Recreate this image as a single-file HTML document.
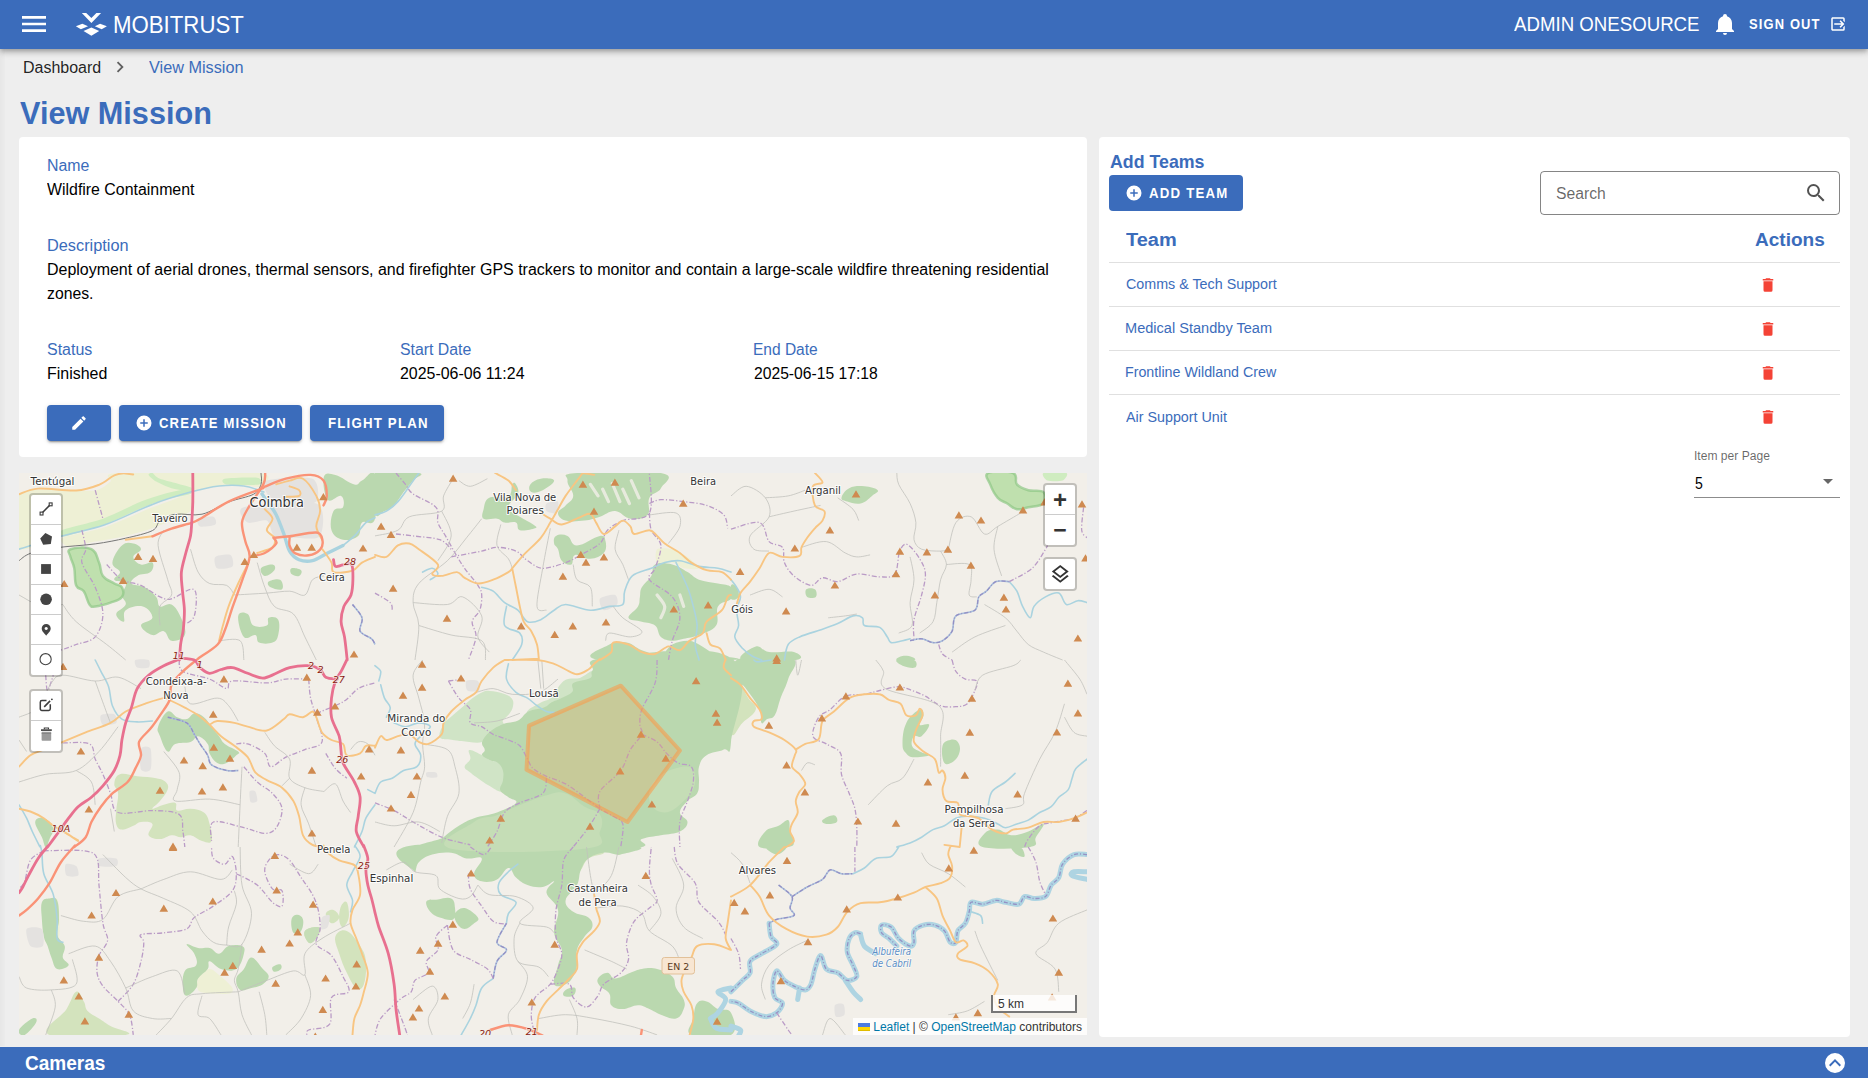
<!DOCTYPE html>
<html lang="en"><head><meta charset="utf-8"><title>View Mission</title>
<style>
*{box-sizing:border-box;margin:0;padding:0}
html,body{width:1868px;height:1078px;overflow:hidden;background:#eee;font-family:"Liberation Sans",sans-serif}
body{position:relative}
.a{position:absolute}
.t{position:absolute;white-space:nowrap;transform-origin:0 50%;display:block}
.bar{left:0;top:0;width:1868px;height:49px;background:#3b6cbb;box-shadow:0 2px 4px -1px rgba(0,0,0,.2),0 4px 5px 0 rgba(0,0,0,.14),0 1px 10px 0 rgba(0,0,0,.12)}
.card{background:#fff;border-radius:4px}
.btn{background:#3b6cbb;border-radius:4px;height:36px;box-shadow:0 3px 1px -2px rgba(0,0,0,.2),0 2px 2px 0 rgba(0,0,0,.14),0 1px 5px 0 rgba(0,0,0,.12)}
.hr{height:1px;background:rgba(0,0,0,.12);left:1109px;width:731px}
svg{position:absolute;display:block;overflow:visible}
.lb{background:#fff;border:2px solid rgba(0,0,0,.2);background-clip:padding-box;border-radius:4px}
.foot{left:0;top:1047px;width:1868px;height:31px;background:#3b6cbb}
</style></head>
<body>
<div class="a" style="left:0;top:48px;width:5px;height:998px;background:linear-gradient(90deg,rgba(0,0,0,.03),rgba(0,0,0,.01))"></div>
<div class="a card" style="left:19px;top:137px;width:1068px;height:320px"></div>
<div class="a card" style="left:1099px;top:137px;width:751px;height:900px"></div>
<!-- map -->
<div class="a" style="left:19px;top:473px;width:1068px;height:562px;overflow:hidden;background:#f2efe9">
<svg style="left:0;top:0" width="1068" height="562" viewBox="19 473 1068 562">
<rect x="19" y="473" width="1068" height="562" fill="#f2efe9"/>
<path fill="#eef0d5" d="M19.0,494.9C24.1,487.2 46.9,490.8 57.1,490.2C67.3,489.6 88.1,491.6 95.2,490.5C102.3,489.4 107.4,483.9 110.5,481.6C113.6,479.3 98.3,474.1 118.1,473.0C137.9,471.9 240.0,471.2 259.1,473.0C278.2,474.8 263.0,484.6 261.0,486.3C259.0,488.0 249.5,485.4 243.9,485.4C238.3,485.4 226.2,485.2 219.1,486.0C212.0,486.8 199.4,489.4 190.5,491.7C181.6,494.0 163.8,499.2 152.4,503.5C141.0,507.8 117.0,519.8 104.8,524.1C92.6,528.4 72.3,532.3 60.9,535.5C49.5,538.7 24.6,553.7 19.0,548.3C13.4,542.9 13.9,502.6 19.0,494.9Z M62.8,537.8C67.6,535.3 92.9,531.4 104.8,527.3C116.7,523.2 141.0,511.6 152.4,507.3C163.8,503.0 185.4,494.4 190.5,494.9C195.6,495.4 195.6,506.6 190.5,511.1C185.4,515.6 161.0,525.0 152.4,528.3C143.8,531.6 133.3,534.1 125.7,535.9C118.1,537.7 102.8,540.2 95.2,541.6C87.6,543.0 72.9,546.9 68.6,546.4C64.3,545.9 58.0,540.3 62.8,537.8Z M657.1,549.2C659.1,547.4 668.2,548.2 672.3,549.2C676.4,550.2 683.9,554.4 687.5,556.9C691.1,559.4 699.5,566.8 699.0,568.3C698.5,569.8 687.3,569.1 683.7,568.3C680.1,567.5 675.8,563.4 672.3,562.6C668.8,561.8 659.1,564.4 657.1,562.6C655.1,560.8 655.1,551.0 657.1,549.2Z M51.4,902.3C52.0,897.8 57.0,897.0 58.1,901.3C59.2,905.6 60.0,930.2 59.4,934.7C58.8,939.2 54.4,939.0 53.3,934.7C52.2,930.4 50.8,906.8 51.4,902.3Z M198.1,978.5C199.4,975.5 206.5,969.3 209.6,969.0C212.7,968.7 218.0,974.1 221.0,976.6C224.0,979.1 231.4,985.7 232.4,988.0C233.4,990.3 232.9,993.2 228.6,993.7C224.3,994.2 204.1,993.8 200.0,991.8C195.9,989.8 196.8,981.5 198.1,978.5Z"/>
<path fill="#cfecc0" d="M61.9,530.2C67.2,527.8 92.4,522.5 102.9,518.7C113.4,514.9 132.9,504.9 141.0,501.6C149.1,498.3 157.7,495.7 163.8,494.0C169.9,492.3 183.1,489.2 186.7,489.2C190.3,489.2 193.6,492.6 190.5,494.0C187.4,495.4 170.4,497.8 163.8,499.7C157.2,501.6 148.9,505.0 141.0,508.3C133.1,511.6 115.2,520.7 104.8,524.5C94.4,528.3 68.5,536.0 62.8,536.8C57.1,537.6 56.6,532.6 61.9,530.2Z M152.4,473.0C153.9,473.5 154.9,476.8 160.0,478.7C165.1,480.6 186.4,485.6 190.5,487.3C194.6,489.0 193.0,491.0 190.5,491.1C188.0,491.2 176.1,489.5 171.5,488.2C166.9,486.9 159.3,483.4 156.2,481.6C153.1,479.8 149.1,476.0 148.6,474.9C148.1,473.8 150.9,472.5 152.4,473.0Z M224.8,478.7C228.9,477.8 252.6,477.0 257.2,477.8C261.8,478.6 263.2,483.5 259.1,484.4C255.0,485.3 231.3,485.2 226.7,484.4C222.1,483.6 220.7,479.6 224.8,478.7Z M1043.5,473.0C1046.0,472.0 1063.9,472.0 1066.4,473.0C1068.9,474.0 1065.1,479.6 1062.6,480.6C1060.1,481.6 1049.9,481.6 1047.4,480.6C1044.9,479.6 1041.0,474.0 1043.5,473.0Z"/>
<path fill="#d3e3bd" d="M114.3,783.9C114.7,780.1 115.4,775.8 120.0,774.3C124.6,772.8 130.0,775.5 137.2,776.3C144.4,777.1 150.5,777.1 156.2,778.2C161.9,779.3 163.4,779.7 165.7,782.0C168.0,784.3 168.8,785.8 167.7,789.6C166.6,793.4 163.1,797.2 160.0,801.0C156.9,804.8 151.6,807.9 152.4,808.7C153.2,809.5 159.2,806.0 163.8,804.8C168.4,803.6 172.6,801.7 175.3,802.9C178.0,804.1 174.2,809.4 177.2,810.6C180.2,811.8 185.2,808.3 190.5,808.7C195.8,809.1 200.1,809.5 203.9,812.5C207.7,815.5 208.1,818.2 209.6,823.9C211.1,829.6 213.0,837.6 211.5,841.0C210.0,844.4 206.2,842.1 202.0,841.0C197.8,839.9 194.7,836.1 190.5,835.3C186.3,834.5 184.8,837.2 181.0,837.2C177.2,837.2 175.7,834.9 171.5,835.3C167.3,835.7 164.6,839.1 160.0,839.1C155.4,839.1 150.1,838.3 148.6,835.3C147.1,832.3 153.9,826.6 152.4,823.9C150.9,821.2 144.8,821.6 141.0,822.0C137.2,822.4 137.1,824.3 133.3,825.8C129.5,827.3 125.3,830.0 121.9,829.6C118.5,829.2 117.3,827.7 116.2,823.9C115.1,820.1 115.8,816.7 116.2,810.6C116.6,804.5 118.5,798.7 118.1,793.4C117.7,788.1 113.9,787.7 114.3,783.9Z M516.0,806.7C525.9,802.7 536.6,798.0 546.5,795.3C556.4,792.6 558.0,791.1 565.6,793.4C573.2,795.7 577.7,802.5 584.6,806.7C591.5,810.9 596.8,809.4 599.9,814.4C603.0,819.4 603.0,824.6 599.9,831.5C596.8,838.4 614.3,845.3 584.6,848.7C554.9,852.1 473.3,854.0 451.2,848.7C429.1,843.4 464.9,828.7 474.1,822.0C483.3,815.3 488.6,818.4 497.0,815.3C505.4,812.2 506.1,810.7 516.0,806.7Z M657.1,778.2C664.7,771.3 679.9,765.9 687.5,766.7C695.1,767.5 696.0,775.1 695.2,782.0C694.4,788.9 689.8,794.9 683.7,801.0C677.6,807.1 671.6,812.5 664.7,812.5C657.8,812.5 650.9,807.9 649.4,801.0C647.9,794.1 649.5,785.1 657.1,778.2Z M731.0,679.1C732.9,669.6 737.1,681.0 740.5,684.8C743.9,688.6 745.1,693.1 748.2,698.1C751.3,703.1 757.0,704.6 755.8,709.6C754.6,714.6 747.4,718.3 742.4,722.9C737.4,727.5 733.3,741.2 731.0,732.4C728.7,723.6 729.1,688.6 731.0,679.1Z M304.9,930.9C306.8,928.2 313.3,927.0 316.3,927.0C319.3,927.0 320.9,927.8 320.1,930.9C319.3,934.0 315.2,940.4 312.5,942.3C309.8,944.2 308.3,942.7 306.8,940.4C305.3,938.1 303.0,933.6 304.9,930.9Z M325.8,913.7C326.2,911.0 330.8,909.1 333.5,909.9C336.2,910.7 339.6,914.8 339.2,917.5C338.8,920.2 334.2,924.0 331.5,923.2C328.8,922.4 325.4,916.4 325.8,913.7Z M341.1,906.1C342.6,902.7 345.3,900.0 346.8,902.3C348.3,904.6 349.5,912.6 348.7,917.5C347.9,922.4 344.9,926.6 343.0,927.0C341.1,927.4 339.6,923.6 339.2,919.4C338.8,915.2 339.6,909.5 341.1,906.1Z M335.4,936.6C336.9,932.0 341.9,929.0 346.8,930.9C351.7,932.8 356.3,940.0 360.1,946.1C363.9,952.2 365.1,953.7 365.9,961.3C366.7,968.9 365.8,978.9 363.9,984.2C362.0,989.5 359.7,990.3 356.3,988.0C352.9,985.7 350.2,979.7 346.8,972.8C343.4,965.9 341.5,960.9 339.2,953.7C336.9,946.5 333.9,941.2 335.4,936.6Z M49.5,1034.9C37.7,1029.7 61.3,1017.6 66.6,1009.0C71.9,1000.4 72.8,993.3 76.2,991.8C79.6,990.3 81.5,997.6 83.8,1001.4C86.1,1005.2 84.6,1007.5 87.6,1010.9C90.6,1014.3 94.4,1015.5 99.0,1018.5C103.6,1021.5 105.2,1022.8 110.5,1026.1C115.8,1029.4 137.9,1033.1 125.7,1034.9C113.5,1036.7 61.3,1040.1 49.5,1034.9Z M565.6,856.5C569.4,851.9 577.0,847.8 584.6,847.0C592.2,846.2 602.9,850.4 603.7,852.7C604.5,855.0 593.0,855.0 588.4,858.4C583.8,861.8 583.8,866.5 580.8,869.9C577.8,873.3 576.2,875.6 573.2,875.6C570.2,875.6 567.1,873.7 565.6,869.9C564.1,866.1 561.8,861.1 565.6,856.5Z"/>
<path fill="#d0e4c6" d="M439.8,737.2C438.2,734.1 441.3,728.3 443.6,724.2C445.9,720.1 448.0,719.7 451.4,716.6C454.8,713.5 456.3,712.4 460.4,708.8C464.5,705.2 467.6,701.8 472.0,698.5C476.4,695.2 478.7,693.7 482.3,692.2C485.9,690.7 485.8,690.7 489.9,690.9C494.0,691.1 498.5,691.9 502.9,693.4C507.3,694.9 509.8,695.9 511.8,698.5C513.8,701.1 513.5,703.2 513.0,706.3C512.5,709.4 511.2,711.1 509.2,713.9C507.2,716.7 504.2,718.0 502.9,720.4C501.6,722.8 505.5,723.1 502.9,725.7C500.3,728.3 494.1,730.1 489.9,733.4C485.7,736.7 487.7,740.6 482.1,742.1C476.5,743.6 467.8,741.5 461.7,741.0C455.6,740.5 455.8,740.5 451.4,739.7C447.0,738.9 441.4,740.3 439.8,737.2Z M469.3,750.0C471.7,749.2 478.0,753.1 482.1,755.1C486.2,757.1 486.5,758.7 489.9,760.2C493.3,761.7 496.0,760.6 498.9,762.7C501.8,764.8 503.5,766.9 504.6,770.5C505.7,774.1 505.2,776.6 504.6,780.8C504.0,785.0 504.8,790.5 501.7,791.5C498.6,792.5 494.1,788.5 489.3,785.8C484.5,783.1 481.7,780.9 477.9,778.2C474.1,775.5 473.0,774.7 470.3,772.4C467.6,770.1 464.6,769.4 464.6,766.7C464.6,764.0 469.4,762.4 470.3,759.1C471.2,755.8 466.9,750.8 469.3,750.0Z M528.4,709.9C530.8,707.7 536.7,704.8 541.4,702.3C546.1,699.8 548.1,700.7 551.7,697.4C555.3,694.1 556.2,689.3 559.3,685.7C562.4,682.1 563.0,680.8 567.1,679.2C571.2,677.6 574.8,679.5 579.9,677.9C585.0,676.3 589.7,670.9 592.6,671.1C595.5,671.3 597.7,674.6 594.2,679.1C590.7,683.6 581.2,689.4 575.1,693.4C569.0,697.4 568.3,697.0 563.7,699.1C559.1,701.2 556.0,701.9 552.2,703.8C548.4,705.7 549.2,706.7 544.6,708.6C540.0,710.5 532.6,713.1 529.4,713.4C526.2,713.7 526.0,712.1 528.4,709.9Z"/>
<path fill="#bad8af" d="M112.4,562.6C112.8,557.3 117.7,549.2 121.9,545.4C126.1,541.6 129.5,542.7 133.3,543.5C137.1,544.3 141.0,546.5 141.0,549.2C141.0,551.9 133.3,553.8 133.3,556.9C133.3,560.0 137.2,563.4 141.0,564.5C144.8,565.6 150.5,561.1 152.4,562.6C154.3,564.1 153.5,569.4 150.5,572.1C147.5,574.8 141.0,573.6 137.2,575.9C133.4,578.2 129.9,581.2 131.4,583.5C132.9,585.8 139.8,584.6 144.8,587.3C149.8,590.0 153.2,593.1 156.2,596.9C159.2,600.7 156.9,604.9 160.0,606.4C163.1,607.9 167.3,602.2 171.5,604.5C175.7,606.8 178.3,611.7 181.0,617.8C183.7,623.9 186.7,630.4 184.8,635.0C182.9,639.6 175.7,641.5 171.5,640.7C167.3,639.9 167.6,632.3 163.8,631.2C160.0,630.1 157.0,636.1 152.4,635.0C147.8,633.9 141.0,628.9 141.0,625.5C141.0,622.1 152.0,621.6 152.4,617.8C152.8,614.0 148.2,607.9 142.9,606.4C137.6,604.9 129.5,607.1 125.7,610.2C121.9,613.3 125.7,620.9 123.8,621.7C121.9,622.5 115.8,617.4 116.2,614.0C116.6,610.6 124.6,608.3 125.7,604.5C126.8,600.7 121.9,599.2 121.9,595.0C121.9,590.8 127.2,586.6 125.7,583.5C124.2,580.4 115.4,582.0 114.3,579.7C113.2,577.4 120.4,575.5 120.0,572.1C119.6,568.7 112.0,567.9 112.4,562.6Z M323.9,476.8C325.4,471.8 329.3,473.4 335.4,474.9C341.5,476.4 349.1,483.3 354.4,484.4C359.7,485.5 357.9,482.5 362.0,480.6C366.1,478.7 372.4,467.3 375.0,474.9C377.6,482.5 377.6,509.2 375.0,518.7C372.4,528.2 365.4,519.2 362.0,522.6C358.6,526.0 362.0,532.5 358.2,535.9C354.4,539.3 348.3,540.8 343.0,539.7C337.7,538.6 333.4,535.9 331.5,530.2C329.6,524.5 331.2,515.7 333.5,511.1C335.8,506.5 341.5,510.3 343.0,507.3C344.5,504.3 344.2,497.4 341.1,495.9C338.0,494.4 331.1,503.5 327.7,499.7C324.3,495.9 322.4,481.8 323.9,476.8Z M238.2,615.9C239.0,611.3 244.7,612.1 247.7,614.0C250.7,615.9 249.6,623.2 253.4,625.5C257.2,627.8 263.7,627.0 266.8,625.5C269.9,624.0 266.4,619.0 268.7,617.8C271.0,616.6 276.3,616.3 278.2,619.7C280.1,623.1 279.3,630.4 278.2,635.0C277.1,639.6 276.3,641.1 272.5,642.6C268.7,644.1 262.5,644.1 259.1,642.6C255.7,641.1 258.3,636.1 255.3,635.0C252.3,633.9 247.3,640.7 243.9,636.9C240.5,633.1 237.4,620.5 238.2,615.9Z M261.0,568.3C262.5,566.0 269.8,564.1 272.5,564.5C275.2,564.9 275.9,567.9 274.4,570.2C272.9,572.5 267.5,576.3 264.8,575.9C262.1,575.5 259.5,570.6 261.0,568.3Z M268.7,581.6C270.6,580.1 277.4,578.2 280.1,579.7C282.8,581.2 283.9,587.8 282.0,589.3C280.1,590.8 273.3,588.8 270.6,587.3C267.9,585.8 266.8,583.1 268.7,581.6Z M291.5,568.3C293.4,567.5 299.6,568.7 301.1,570.2C302.6,571.7 301.0,575.1 299.1,575.9C297.2,576.7 293.0,575.5 291.5,574.0C290.0,572.5 289.6,569.1 291.5,568.3Z M375.0,473.0C383.8,465.0 411.2,471.5 418.8,473.0C426.4,474.5 416.1,476.8 413.1,480.6C410.1,484.4 407.4,487.1 403.6,492.1C399.8,497.1 397.9,501.6 394.1,505.4C390.3,509.2 388.3,509.6 384.5,511.1C380.7,512.6 376.9,520.6 375.0,513.0C373.1,505.4 366.2,481.0 375.0,473.0Z M483.6,509.2C484.7,505.0 484.3,500.5 489.3,497.8C494.3,495.1 503.8,498.6 508.4,495.9C513.0,493.2 510.7,486.7 512.2,484.4C513.7,482.1 514.9,482.5 516.0,484.4C517.1,486.3 519.4,489.4 517.9,494.0C516.4,498.6 508.0,502.7 508.4,507.3C508.8,511.9 514.8,513.4 519.8,516.8C524.8,520.2 530.1,522.2 533.2,524.5C536.3,526.8 537.8,527.2 535.1,528.3C532.4,529.4 523.6,531.3 519.8,530.2C516.0,529.1 519.0,524.1 516.0,522.6C513.0,521.1 508.4,523.4 504.6,522.6C500.8,521.8 501.2,519.5 497.0,518.7C492.8,517.9 486.3,520.6 483.6,518.7C480.9,516.8 482.5,513.4 483.6,509.2Z M530.3,484.4C532.2,481.7 536.0,479.5 540.8,478.7C545.6,477.9 553.7,478.3 554.1,480.6C554.5,482.9 547.3,487.9 542.7,490.2C538.1,492.5 533.8,493.3 531.3,492.1C528.8,490.9 528.4,487.1 530.3,484.4Z M567.5,480.6C568.3,476.0 558.3,474.5 577.0,473.0C595.7,471.5 644.1,470.0 660.9,473.0C677.7,476.0 663.2,483.2 660.9,488.2C658.6,493.2 652.1,492.5 649.4,497.8C646.7,503.1 651.3,510.7 647.5,514.9C643.7,519.1 636.9,519.5 630.4,518.7C623.9,517.9 621.2,511.5 615.1,511.1C609.0,510.7 606.0,514.9 599.9,516.8C593.8,518.7 591.5,519.8 584.6,520.6C577.7,521.4 570.9,522.1 565.6,520.6C560.3,519.1 558.0,516.0 558.0,513.0C558.0,510.0 562.6,508.8 565.6,505.4C568.6,502.0 572.8,500.9 573.2,495.9C573.6,490.9 566.7,485.2 567.5,480.6Z M556.0,535.9C558.7,534.4 563.3,534.0 567.5,535.9C571.7,537.8 570.5,545.4 577.0,545.4C583.5,545.4 594.2,536.7 599.9,535.9C605.6,535.1 604.8,538.2 605.6,541.6C606.4,545.0 606.7,549.6 603.7,553.0C600.7,556.4 596.1,558.4 590.4,558.8C584.7,559.2 578.9,553.8 575.1,554.9C571.3,556.0 574.0,563.3 571.3,564.5C568.6,565.7 564.5,563.8 561.8,560.7C559.1,557.6 559.5,552.6 558.0,549.2C556.5,545.8 554.5,546.2 554.1,543.5C553.7,540.8 553.3,537.4 556.0,535.9Z M641.8,587.3C644.1,583.1 648.6,580.5 651.3,575.9C654.0,571.3 650.9,566.8 655.1,564.5C659.3,562.2 665.8,563.0 672.3,564.5C678.8,566.0 682.2,569.1 687.5,572.1C692.8,575.1 692.9,577.4 699.0,579.7C705.1,582.0 711.6,582.0 718.0,583.5C724.4,585.0 728.4,584.2 731.0,587.3C733.6,590.4 733.6,595.0 731.0,598.8C728.4,602.6 721.0,601.1 718.0,606.4C715.0,611.7 719.9,619.8 716.1,625.5C712.3,631.2 705.5,632.3 699.0,635.0C692.5,637.7 689.0,637.7 683.7,638.8C678.4,639.9 676.9,641.1 672.3,640.7C667.7,640.3 664.3,639.9 660.9,636.9C657.5,633.9 658.9,628.5 655.1,625.5C651.3,622.5 647.1,623.2 641.8,621.7C636.5,620.2 629.3,620.9 628.5,617.8C627.7,614.7 635.7,610.6 638.0,606.4C640.3,602.2 639.1,600.7 639.9,596.9C640.7,593.1 639.5,591.5 641.8,587.3Z M599.9,660.0C575.6,656.9 604.1,648.0 609.4,644.5C614.7,641.0 620.1,641.5 626.6,642.6C633.1,643.7 634.9,647.9 641.8,650.2C648.7,652.5 654.8,655.1 660.9,654.0C667.0,652.9 667.0,647.2 672.3,644.5C677.6,641.8 682.2,640.7 687.5,640.7C692.8,640.7 693.7,641.8 699.0,644.5C704.3,647.2 707.8,650.9 714.2,654.0C720.6,657.1 753.9,658.8 731.0,660.0C708.1,661.2 624.2,663.1 599.9,660.0Z M841.5,497.8C841.9,495.1 844.6,490.5 849.2,488.2C853.8,485.9 858.7,485.9 864.4,486.3C870.1,486.7 876.2,488.3 877.7,490.2C879.2,492.1 875.4,493.2 872.0,495.9C868.6,498.6 865.5,502.4 860.6,503.5C855.7,504.6 851.1,502.7 847.3,501.6C843.5,500.5 841.1,500.5 841.5,497.8Z M806.3,589.3C807.8,587.8 813.0,587.8 814.9,589.3C816.8,590.8 817.3,595.4 815.8,596.9C814.3,598.4 809.1,598.4 807.2,596.9C805.3,595.4 804.8,590.8 806.3,589.3Z M742.4,660.0C734.4,657.3 750.5,648.0 755.8,646.4C761.1,644.8 761.5,651.0 769.1,652.1C776.7,653.2 788.6,650.5 793.9,652.1C799.2,653.7 806.1,658.4 795.8,660.0C785.5,661.6 750.4,662.7 742.4,660.0Z M896.8,660.0C894.5,659.2 899.5,656.6 902.5,656.0C905.5,655.4 909.7,656.1 912.0,656.9C914.3,657.7 917.0,659.4 914.0,660.0C911.0,660.6 899.1,660.8 896.8,660.0Z M731.0,585.4C732.1,583.1 735.2,585.0 736.7,587.3C738.2,589.6 739.7,594.6 738.6,596.9C737.5,599.2 732.5,601.1 731.0,598.8C729.5,596.5 729.9,587.7 731.0,585.4Z M158.1,726.7C159.6,721.8 163.9,713.4 167.7,711.5C171.5,709.6 173.4,715.7 177.2,717.2C181.0,718.7 183.3,719.9 186.7,719.1C190.1,718.3 190.9,713.8 194.3,713.4C197.7,713.0 200.5,714.5 203.9,717.2C207.3,719.9 208.5,722.9 211.5,726.7C214.5,730.5 216.4,732.8 219.1,736.2C221.8,739.6 221.0,740.8 224.8,743.9C228.6,747.0 235.9,749.2 238.2,751.5C240.5,753.8 238.6,753.0 236.3,755.3C234.0,757.6 230.5,761.4 226.7,762.9C222.9,764.4 220.6,764.8 217.2,762.9C213.8,761.0 211.5,757.2 209.6,753.4C207.7,749.6 210.0,747.3 207.7,743.9C205.4,740.5 201.5,736.6 198.1,736.2C194.7,735.8 195.1,740.4 190.5,741.9C185.9,743.4 179.9,742.0 175.3,743.9C170.7,745.8 170.8,753.0 167.7,751.5C164.6,750.0 161.9,741.2 160.0,736.2C158.1,731.2 156.6,731.6 158.1,726.7Z M35.2,822.0C35.6,818.2 40.2,817.1 43.8,818.2C47.4,819.3 52.2,823.5 53.3,827.7C54.4,831.9 51.0,835.2 49.5,839.1C48.0,843.0 47.2,847.4 45.7,847.0C44.2,846.6 44.0,842.2 41.9,837.2C39.8,832.2 34.8,825.8 35.2,822.0Z M605.6,658.1C633.3,655.7 705.9,641.3 731.0,658.1C756.1,674.9 732.4,723.6 731.0,741.9C729.6,760.2 728.7,746.9 723.8,749.6C718.9,752.3 711.6,751.9 706.6,755.3C701.6,758.7 700.5,761.4 699.0,766.7C697.5,772.0 699.4,776.7 699.0,782.0C698.6,787.3 699.4,789.6 697.1,793.4C694.8,797.2 690.9,797.2 687.5,801.0C684.1,804.8 679.9,808.3 679.9,812.5C679.9,816.7 687.5,818.2 687.5,822.0C687.5,825.8 685.2,828.8 679.9,831.5C674.6,834.2 668.5,833.8 660.9,835.3C653.3,836.8 649.4,836.4 641.8,839.1C634.2,841.8 664.7,846.8 622.8,848.7C580.9,850.6 468.0,851.0 432.2,848.7C396.4,846.4 438.3,841.8 443.6,837.2C448.9,832.6 452.8,829.6 458.9,825.8C465.0,822.0 466.5,820.9 474.1,818.2C481.7,815.5 488.6,815.6 497.0,812.5C505.4,809.4 513.7,806.0 516.0,802.9C518.3,799.8 511.6,799.8 508.4,797.2C505.2,794.6 501.3,793.3 500.2,790.0C499.1,786.7 502.4,784.7 502.9,780.8C503.4,776.9 503.9,774.1 502.9,770.5C501.9,766.9 500.3,764.8 497.7,762.7C495.1,760.6 493.0,761.7 489.9,760.2C486.8,758.7 483.1,757.1 482.1,755.1C481.1,753.1 484.8,752.6 484.8,750.0C484.8,747.4 481.1,745.7 482.1,742.1C483.1,738.5 485.7,735.4 489.9,731.8C494.1,728.2 497.3,726.5 502.9,724.2C508.5,721.9 513.0,722.9 518.1,720.4C523.2,717.9 523.2,714.1 528.4,711.5C533.6,708.9 539.2,709.3 543.9,707.5C548.6,705.7 548.4,704.1 551.7,702.3C555.0,700.5 556.5,700.6 560.6,698.5C564.7,696.4 569.6,695.1 572.2,692.0C574.8,688.9 569.8,685.9 573.4,683.1C577.0,680.3 586.4,680.5 590.2,677.9C594.0,675.3 589.5,674.3 592.6,670.3C595.7,666.3 577.9,660.5 605.6,658.1Z M731.0,671.4C733.3,667.2 730.2,660.8 742.4,658.1C754.6,655.4 782.8,653.9 792.0,658.1C801.2,662.3 790.5,671.1 788.2,679.1C785.9,687.1 783.3,690.9 780.6,698.1C777.9,705.3 777.5,711.1 774.8,715.3C772.1,719.5 769.9,717.6 767.2,719.1C764.5,720.6 763.0,724.8 761.5,722.9C760.0,721.0 761.9,715.3 759.6,709.6C757.3,703.9 753.9,699.6 750.1,694.3C746.3,689.0 744.3,685.9 740.5,682.9C736.7,679.9 732.9,681.4 731.0,679.1C729.1,676.8 728.7,675.6 731.0,671.4Z M896.8,660.0C899.1,658.9 910.4,658.5 914.0,660.0C917.6,661.5 917.2,666.5 914.9,667.6C912.6,668.7 906.1,667.2 902.5,665.7C898.9,664.2 894.5,661.1 896.8,660.0Z M906.3,722.9C909.7,716.0 916.3,711.1 919.7,709.6C923.1,708.1 923.5,712.3 923.5,715.3C923.5,718.3 918.6,722.9 919.7,724.8C920.8,726.7 928.8,722.5 929.2,724.8C929.6,727.1 924.6,733.9 921.6,736.2C918.6,738.5 915.9,734.3 914.0,736.2C912.1,738.1 910.9,742.7 912.0,745.8C913.1,748.9 916.3,749.6 919.7,751.5C923.1,753.4 930.3,754.2 929.2,755.3C928.1,756.4 918.6,757.6 914.0,757.2C909.4,756.8 908.6,756.1 906.3,753.4C904.0,750.7 902.5,750.0 902.5,743.9C902.5,737.8 902.9,729.8 906.3,722.9Z M942.5,745.8C943.7,741.2 947.1,740.8 950.2,740.0C953.3,739.2 955.9,739.6 957.8,741.9C959.7,744.2 960.5,747.7 959.7,751.5C958.9,755.3 957.1,758.7 954.0,761.0C950.9,763.3 946.7,765.9 944.4,762.9C942.1,759.9 941.3,750.4 942.5,745.8Z M759.6,847.0C755.0,843.9 761.5,835.7 765.3,831.5C769.1,827.3 774.0,828.1 778.6,825.8C783.2,823.5 785.9,819.0 788.2,820.1C790.5,821.2 789.0,827.3 790.1,831.5C791.2,835.7 794.3,837.9 793.9,841.0C793.5,844.1 795.1,845.8 788.2,847.0C781.3,848.2 764.2,850.1 759.6,847.0Z M822.5,820.1C824.0,818.4 831.0,814.9 833.9,815.3C836.8,815.7 838.3,820.3 836.8,822.0C835.3,823.7 829.2,824.3 826.3,823.9C823.4,823.5 821.0,821.8 822.5,820.1Z M982.6,847.0C973.5,844.3 981.5,836.9 984.5,833.4C987.5,829.9 992.5,829.2 997.8,829.6C1003.1,830.0 1005.0,834.9 1011.1,835.3C1017.2,835.7 1021.8,833.8 1028.3,831.5C1034.8,829.2 1042.0,822.8 1043.5,823.9C1045.0,825.0 1038.6,832.6 1035.9,837.2C1033.2,841.8 1040.9,845.0 1030.2,847.0C1019.5,849.0 991.7,849.7 982.6,847.0Z M41.9,902.3C43.4,898.1 46.5,898.9 49.5,898.5C52.5,898.1 55.2,896.2 57.1,900.4C59.0,904.6 59.0,912.5 59.0,919.4C59.0,926.3 56.0,929.4 57.1,934.7C58.2,940.0 63.6,941.5 64.7,946.1C65.8,950.7 62.0,953.7 62.8,957.5C63.6,961.3 69.7,962.9 68.6,965.2C67.5,967.5 60.5,970.5 57.1,969.0C53.7,967.5 53.3,962.1 51.4,957.5C49.5,952.9 49.1,950.3 47.6,946.1C46.1,941.9 44.9,941.9 43.8,936.6C42.7,931.3 42.3,926.3 41.9,919.4C41.5,912.5 40.4,906.5 41.9,902.3Z M186.7,944.2C187.5,943.1 193.5,947.2 198.1,948.0C202.7,948.8 205.4,946.9 209.6,948.0C213.8,949.1 215.3,954.1 219.1,953.7C222.9,953.3 224.0,947.6 228.6,946.1C233.2,944.6 238.9,944.6 242.0,946.1C245.1,947.6 245.0,949.1 243.9,953.7C242.8,958.3 240.9,965.9 236.3,969.0C231.7,972.1 226.3,970.5 221.0,969.0C215.7,967.5 212.3,961.3 209.6,961.3C206.9,961.3 210.0,965.6 207.7,969.0C205.4,972.4 200.4,974.7 198.1,978.5C195.8,982.3 198.5,984.6 196.2,988.0C193.9,991.4 189.4,995.7 186.7,995.7C184.0,995.7 183.3,993.0 182.9,988.0C182.5,983.0 182.1,975.5 184.8,970.9C187.5,966.3 194.3,968.6 196.2,965.2C198.1,961.8 196.2,957.9 194.3,953.7C192.4,949.5 185.9,945.3 186.7,944.2Z M236.3,978.5C237.1,974.3 240.9,973.2 243.9,969.0C246.9,964.8 247.7,957.5 251.5,957.5C255.3,957.5 259.5,965.2 262.9,969.0C266.3,972.8 268.7,973.6 268.7,976.6C268.7,979.6 266.3,981.9 262.9,984.2C259.5,986.5 256.1,986.9 251.5,988.0C246.9,989.1 243.1,991.8 240.1,989.9C237.1,988.0 235.5,982.7 236.3,978.5Z M272.5,967.1C273.6,965.6 278.4,963.8 280.1,964.2C281.8,964.6 282.1,967.5 281.0,969.0C279.9,970.5 276.1,972.2 274.4,971.8C272.7,971.4 271.4,968.6 272.5,967.1Z M291.5,919.4C292.3,915.8 294.9,914.7 297.2,914.7C299.5,914.7 302.2,916.2 303.0,919.4C303.8,922.6 303.0,928.2 301.1,930.9C299.2,933.6 295.3,935.1 293.4,932.8C291.5,930.5 290.7,923.0 291.5,919.4Z M19.0,1030.0C20.5,1026.7 28.9,1020.0 32.3,1018.5C35.7,1017.0 37.7,1019.0 36.2,1022.3C34.7,1025.6 28.1,1033.4 24.7,1034.9C21.3,1036.4 17.5,1033.3 19.0,1030.0Z M415.0,845.1C456.6,839.8 581.6,843.2 622.8,845.1C664.0,847.0 624.6,853.1 620.8,854.6C617.0,856.1 610.2,851.9 603.7,852.7C597.2,853.5 593.0,855.0 588.4,858.4C583.8,861.8 583.1,864.6 580.8,869.9C578.5,875.2 580.0,879.0 577.0,885.1C574.0,891.2 566.4,895.1 565.6,900.4C564.8,905.7 568.6,908.4 573.2,911.8C577.8,915.2 584.6,914.5 588.4,917.5C592.2,920.5 593.1,923.2 592.3,927.0C591.5,930.8 587.7,932.0 584.6,936.6C581.5,941.2 578.5,944.2 577.0,949.9C575.5,955.6 577.8,959.9 577.0,965.2C576.2,970.5 575.5,972.8 573.2,976.6C570.9,980.4 569.4,982.7 565.6,984.2C561.8,985.7 555.6,988.0 554.1,984.2C552.6,980.4 556.5,972.1 558.0,965.2C559.5,958.3 562.6,956.4 561.8,949.9C561.0,943.4 554.9,940.8 554.1,932.8C553.3,924.8 559.5,917.9 558.0,909.9C556.5,901.9 547.3,898.4 546.5,892.7C545.7,887.0 554.9,882.4 554.1,881.3C553.3,880.2 548.0,886.2 542.7,887.0C537.4,887.8 532.8,887.0 527.5,885.1C522.2,883.2 519.8,880.9 516.0,877.5C512.2,874.1 512.2,867.6 508.4,868.0C504.6,868.4 502.3,876.7 497.0,879.4C491.7,882.1 486.3,882.4 481.7,881.3C477.1,880.2 474.1,878.3 474.1,873.7C474.1,869.1 483.2,861.5 481.7,858.4C480.2,855.3 472.6,859.5 466.5,858.4C460.4,857.3 458.1,853.5 451.2,852.7C444.3,851.9 438.7,852.7 432.2,854.6C425.7,856.5 422.2,858.8 418.8,862.2C415.4,865.6 415.8,875.2 415.0,871.8C414.2,868.4 373.4,850.4 415.0,845.1Z M426.5,901.3C428.0,898.8 433.0,900.0 437.9,899.4C442.8,898.8 447.8,896.8 451.2,898.5C454.6,900.2 454.6,903.8 455.0,908.0C455.4,912.2 456.1,917.5 453.1,919.4C450.1,921.3 444.4,919.0 439.8,917.5C435.2,916.0 433.0,915.0 430.3,911.8C427.6,908.6 425.0,903.8 426.5,901.3Z M455.0,913.7C456.5,910.7 460.0,907.2 464.6,908.0C469.2,908.8 476.0,914.5 477.9,917.5C479.8,920.5 476.8,920.9 474.1,923.2C471.4,925.5 468.0,928.9 464.6,928.9C461.2,928.9 458.8,926.2 456.9,923.2C455.0,920.2 453.5,916.7 455.0,913.7Z M598.0,978.5C599.5,975.8 604.1,972.8 607.5,972.8C610.9,972.8 610.5,978.5 615.1,978.5C619.7,978.5 625.1,974.7 630.4,972.8C635.7,970.9 636.5,969.8 641.8,969.0C647.1,968.2 651.0,967.5 657.1,969.0C663.2,970.5 668.5,972.8 672.3,976.6C676.1,980.4 673.8,983.4 676.1,988.0C678.4,992.6 682.2,995.3 683.7,999.5C685.2,1003.7 685.2,1005.2 683.7,1009.0C682.2,1012.8 680.7,1017.4 676.1,1018.5C671.5,1019.6 666.2,1016.6 660.9,1014.7C655.6,1012.8 654.0,1010.9 649.4,1009.0C644.8,1007.1 643.3,1005.2 638.0,1005.2C632.7,1005.2 628.1,1009.0 622.8,1009.0C617.5,1009.0 614.0,1008.3 611.3,1005.2C608.6,1002.1 611.7,997.5 609.4,993.7C607.1,989.9 602.2,989.1 599.9,986.1C597.6,983.1 596.5,981.2 598.0,978.5Z M697.1,1003.3C699.8,999.9 702.4,1000.3 706.6,1001.4C710.8,1002.5 713.1,1006.7 718.0,1009.0C722.9,1011.3 728.4,1007.6 731.0,1012.8C733.6,1018.0 738.9,1030.5 731.0,1034.9C723.1,1039.3 698.9,1038.2 691.4,1034.9C683.9,1031.6 692.2,1024.8 693.3,1018.5C694.4,1012.2 694.4,1006.7 697.1,1003.3Z M565.6,989.9C567.9,988.4 573.6,986.8 575.1,988.0C576.6,989.2 575.5,994.2 573.2,995.7C570.9,997.2 565.2,996.9 563.7,995.7C562.2,994.5 563.3,991.4 565.6,989.9Z M765.3,846.0C767.2,844.3 784.0,844.3 786.3,846.0C788.6,847.7 780.9,854.6 776.7,854.6C772.5,854.6 763.4,847.7 765.3,846.0Z M1011.1,847.0C1011.9,845.5 1018.0,845.1 1020.7,847.0C1023.4,848.9 1025.3,855.0 1024.5,856.5C1023.7,858.0 1019.6,856.5 1016.9,854.6C1014.2,852.7 1010.3,848.5 1011.1,847.0Z"/>
<path fill="#c5ddb6" d="M516.0,806.7C525.9,802.7 536.6,798.0 546.5,795.3C556.4,792.6 558.0,791.1 565.6,793.4C573.2,795.7 577.7,802.5 584.6,806.7C591.5,810.9 596.8,809.4 599.9,814.4C603.0,819.4 603.0,824.6 599.9,831.5C596.8,838.4 614.3,845.3 584.6,848.7C554.9,852.1 473.3,854.0 451.2,848.7C429.1,843.4 464.9,828.7 474.1,822.0C483.3,815.3 488.6,818.4 497.0,815.3C505.4,812.2 506.1,810.7 516.0,806.7Z M657.1,778.2C664.7,771.3 679.9,765.9 687.5,766.7C695.1,767.5 696.0,775.1 695.2,782.0C694.4,788.9 689.8,794.9 683.7,801.0C677.6,807.1 671.6,812.5 664.7,812.5C657.8,812.5 650.9,807.9 649.4,801.0C647.9,794.1 649.5,785.1 657.1,778.2Z M304.9,930.9C306.8,928.2 313.3,927.0 316.3,927.0C319.3,927.0 320.9,927.8 320.1,930.9C319.3,934.0 315.2,940.4 312.5,942.3C309.8,944.2 308.3,942.7 306.8,940.4C305.3,938.1 303.0,933.6 304.9,930.9Z"/>
<path fill="none" stroke="#f2efe9" stroke-opacity=".8" stroke-width="3.2" stroke-linecap="round" d="M602.7,489.2 L608.5,501.6 M612.3,483.5 L619.9,501.6 M622.8,489.2 L629.4,503.5 M631.3,480.6 L639.0,497.8 M590.4,484.4 L598.0,495.9 M657.1,595.0C658.4,596.9 664.1,602.6 664.7,606.4C665.3,610.2 661.5,615.9 660.9,617.8 M679.9,595.0 L683.7,606.4"/>
<path fill="#bfe0ae" stroke="#8fc886" stroke-opacity=".7" stroke-width="2.5" stroke-linejoin="round" d="M70.5,549.2C74.7,547.7 85.7,546.5 91.4,549.2C97.1,551.9 96.7,557.3 99.0,562.6C101.3,567.9 99.8,571.7 102.9,575.9C106.0,580.1 110.5,581.2 114.3,583.5C118.1,585.8 120.4,584.6 121.9,587.3C123.4,590.0 124.2,593.8 121.9,596.9C119.6,600.0 115.8,600.7 110.5,602.6C105.2,604.5 99.4,606.0 95.2,606.4C91.0,606.8 91.8,607.5 89.5,604.5C87.2,601.5 86.5,595.0 83.8,591.2C81.1,587.4 78.1,590.0 76.2,585.4C74.3,580.8 75.4,574.0 74.3,568.3C73.2,562.6 71.3,560.7 70.5,556.9C69.7,553.1 66.3,550.7 70.5,549.2Z M988.3,473.0C992.9,470.7 1007.4,470.7 1013.1,473.0C1018.8,475.3 1013.9,481.0 1016.9,484.4C1019.9,487.8 1023.0,488.7 1028.3,490.2C1033.6,491.7 1040.5,489.4 1043.5,492.1C1046.5,494.8 1046.5,500.5 1043.5,503.5C1040.5,506.5 1033.6,506.2 1028.3,507.3C1023.0,508.4 1021.1,510.0 1016.9,509.2C1012.7,508.4 1011.1,505.8 1007.3,503.5C1003.5,501.2 1001.2,501.6 997.8,497.8C994.4,494.0 992.1,489.4 990.2,484.4C988.3,479.4 983.7,475.3 988.3,473.0Z"/>
<path fill="#e4e2e0" d="M215.3,556.9C217.1,555.1 228.2,553.6 230.5,554.9C232.8,556.2 234.2,564.6 232.4,566.4C230.6,568.2 219.5,569.6 217.2,568.3C214.9,567.0 213.5,558.7 215.3,556.9Z M198.1,518.7C199.9,517.4 211.1,516.0 213.4,516.8C215.7,517.6 217.1,523.2 215.3,524.5C213.5,525.8 202.3,527.2 200.0,526.4C197.7,525.6 196.3,520.0 198.1,518.7Z M243.9,507.3C253.0,504.8 306.1,499.7 316.3,503.5C326.5,507.3 323.2,531.3 320.1,535.9C317.0,540.5 299.5,537.8 293.4,537.8C287.3,537.8 277.9,538.2 274.4,535.9C270.9,533.6 270.4,522.4 266.8,520.6C263.2,518.8 250.8,524.4 247.7,522.6C244.6,520.8 234.8,509.8 243.9,507.3Z M266.8,480.6C272.6,478.3 305.9,475.9 312.5,478.7C319.1,481.5 319.4,498.0 316.3,501.6C313.2,505.2 295.9,506.2 289.6,505.4C283.3,504.6 271.7,499.2 268.7,495.9C265.7,492.6 261.0,482.9 266.8,480.6Z M546.5,503.5C548.0,502.2 556.7,500.3 558.0,501.6C559.3,502.9 557.5,511.7 556.0,513.0C554.5,514.3 547.8,512.4 546.5,511.1C545.2,509.8 545.0,504.8 546.5,503.5Z M599.9,598.8C601.4,596.8 612.8,594.2 615.1,595.0C617.4,595.8 618.5,602.5 617.0,604.5C615.5,606.5 606.0,611.0 603.7,610.2C601.4,609.4 598.4,600.8 599.9,598.8Z M141.0,748.6C142.3,745.8 149.2,745.8 150.5,748.6C151.8,751.4 151.8,766.8 150.5,769.6C149.2,772.4 142.3,772.4 141.0,769.6C139.7,766.8 139.7,751.4 141.0,748.6Z M100.9,715.3C102.4,713.9 112.3,713.3 114.3,714.3C116.3,715.3 117.7,721.5 116.2,722.9C114.7,724.3 104.9,725.8 102.9,724.8C100.9,723.8 99.4,716.7 100.9,715.3Z M135.3,660.0C136.8,659.0 146.8,659.0 148.6,660.0C150.4,661.0 150.1,666.6 148.6,667.6C147.1,668.6 139.0,668.6 137.2,667.6C135.4,666.6 133.8,661.0 135.3,660.0Z M249.6,791.5C250.2,790.1 254.3,790.2 255.3,791.5C256.3,792.8 257.8,799.6 257.2,801.0C256.6,802.4 251.6,803.3 250.6,802.0C249.6,800.7 249.0,792.9 249.6,791.5Z M466.5,681.0C467.9,679.7 476.2,679.7 477.9,681.0C479.6,682.3 480.3,689.2 478.9,690.5C477.5,691.8 469.1,691.8 467.4,690.5C465.7,689.2 465.1,682.3 466.5,681.0Z M426.5,772.4C427.6,771.8 434.6,771.8 436.0,772.4C437.4,773.0 438.0,776.6 436.9,777.2C435.8,777.8 428.8,777.8 427.4,777.2C426.0,776.6 425.4,773.0 426.5,772.4Z M26.6,928.9C28.1,926.6 39.7,926.6 41.9,928.9C44.1,931.2 44.3,943.8 42.8,946.1C41.3,948.4 32.6,948.4 30.4,946.1C28.2,943.8 25.1,931.2 26.6,928.9Z M99.0,858.4C101.3,857.4 113.9,857.4 116.2,858.4C118.5,859.4 118.5,865.1 116.2,866.1C113.9,867.1 101.3,867.1 99.0,866.1C96.7,865.1 96.7,859.4 99.0,858.4Z M65.7,864.2C67.0,862.9 74.5,864.6 76.2,866.1C77.9,867.6 79.4,874.3 78.1,875.6C76.8,876.9 68.3,877.1 66.6,875.6C64.9,874.1 64.4,865.5 65.7,864.2Z M322.0,917.5C323.1,915.7 328.8,914.3 329.6,915.6C330.4,916.9 328.8,925.2 327.7,927.0C326.6,928.8 321.9,930.2 321.1,928.9C320.3,927.6 320.9,919.3 322.0,917.5Z M834.9,1005.2C835.9,1003.5 842.1,1002.9 843.4,1004.2C844.7,1005.5 845.4,1013.0 844.4,1014.7C843.4,1016.4 837.1,1017.9 835.8,1016.6C834.5,1015.3 833.9,1006.9 834.9,1005.2Z"/>
<path fill="none" stroke="#aed4e2" stroke-width="5" stroke-linecap="round" stroke-linejoin="round" d="M1087.0,854.6C1084.8,854.6 1078.1,853.0 1074.0,854.6C1069.9,856.2 1065.1,860.4 1062.6,864.2C1060.1,868.0 1060.7,874.0 1058.8,877.5C1056.9,881.0 1053.4,881.9 1051.2,885.1C1049.0,888.3 1048.4,894.4 1045.5,896.6C1042.6,898.8 1037.5,898.5 1034.0,898.5C1030.5,898.5 1027.0,895.6 1024.5,896.6C1022.0,897.6 1022.0,903.2 1018.8,904.2C1015.6,905.2 1009.2,902.9 1005.4,902.3C1001.6,901.7 999.7,900.1 995.9,900.4C992.1,900.7 986.7,903.9 982.6,904.2C978.5,904.5 973.3,901.0 971.1,902.3C968.9,903.6 970.2,908.3 969.2,911.8C968.2,915.3 967.3,920.0 965.4,923.2C963.5,926.4 959.4,927.7 957.8,930.9C956.2,934.1 957.2,940.4 955.9,942.3C954.6,944.2 952.1,944.2 950.2,942.3C948.3,940.4 947.0,933.8 944.4,930.9C941.8,928.0 938.4,926.1 934.9,925.1C931.4,924.1 927.0,924.1 923.5,925.1C920.0,926.1 915.6,928.0 914.0,930.9C912.4,933.8 914.6,939.8 914.0,942.3C913.4,944.8 912.6,946.7 910.1,946.1C907.6,945.5 901.9,941.7 898.7,938.5C895.5,935.3 894.0,929.2 891.1,927.0C888.2,924.8 883.2,924.1 881.6,925.1C880.0,926.1 880.3,930.6 881.6,932.8C882.9,935.0 886.7,936.3 889.2,938.5C891.7,940.7 895.5,944.8 896.8,946.1 M860.6,933.7C859.6,933.6 856.8,932.0 854.9,932.8C853.0,933.6 850.5,935.3 849.2,938.5C847.9,941.7 846.7,947.3 847.3,951.8C847.9,956.2 851.4,961.1 853.0,965.2C854.6,969.3 857.8,974.1 856.8,976.6C855.8,979.1 850.5,981.0 847.3,980.4C844.1,979.8 841.2,974.7 837.7,972.8C834.2,970.9 829.1,971.9 826.3,969.0C823.4,966.1 822.5,955.6 820.6,955.6C818.7,955.6 816.5,964.2 814.9,969.0C813.3,973.8 812.6,980.7 811.0,984.2C809.4,987.7 808.1,989.6 805.3,989.9C802.4,990.2 797.4,987.7 793.9,986.1C790.4,984.5 787.3,982.9 784.4,980.4C781.5,977.9 778.6,970.3 776.7,970.9C774.8,971.5 773.2,979.8 772.9,984.2C772.6,988.7 773.2,994.4 774.8,997.6C776.4,1000.8 782.2,1000.8 782.5,1003.3C782.8,1005.8 779.6,1010.6 776.7,1012.8C773.8,1015.0 769.7,1016.9 765.3,1016.6C760.9,1016.3 754.5,1013.1 750.1,1010.9C745.7,1008.7 741.8,1004.9 738.6,1003.3C735.4,1001.7 732.3,1001.7 731.0,1001.4 M769.1,923.2C769.4,925.4 769.7,933.1 771.0,936.6C772.3,940.1 778.3,941.4 776.7,944.2C775.1,947.1 765.9,950.9 761.5,953.7C757.1,956.6 752.0,958.1 750.1,961.3C748.2,964.5 751.4,969.6 750.1,972.8C748.8,976.0 745.6,977.2 742.4,980.4C739.2,983.6 732.9,989.9 731.0,991.8 M860.6,934.7C861.2,936.6 861.9,942.9 864.4,946.1C866.9,949.3 873.9,952.4 875.8,953.7 M845.3,980.4C846.6,982.3 850.5,988.6 853.0,991.8C855.5,995.0 859.3,998.2 860.6,999.5 M799.6,988.0 L797.7,999.5 M1087.0,871.8C1084.8,871.8 1076.5,871.2 1074.0,871.8C1071.5,872.4 1069.9,874.3 1072.1,875.6C1074.3,876.9 1084.5,878.8 1087.0,879.4 M710.4,1018.5C711.7,1017.5 715.5,1016.0 718.0,1012.8C720.5,1009.6 725.7,1003.0 725.7,999.5C725.7,996.0 717.1,993.7 718.0,991.8C718.9,989.9 728.8,988.6 731.0,988.0 M710.4,1018.5C711.4,1020.1 712.7,1026.1 716.1,1028.0C719.5,1029.9 728.5,1029.7 731.0,1030.0 M731.0,1026.1C732.6,1026.8 739.2,1028.4 740.5,1030.0C741.8,1031.6 738.9,1034.8 738.6,1035.7"/>
<path fill="none" stroke="#aad3df" stroke-width="3.4" stroke-linecap="round" d="M262.0,494.0C263.1,495.6 266.3,500.0 268.7,503.5C271.1,507.0 273.8,509.8 276.3,514.9C278.8,520.0 281.7,528.0 283.9,534.0C286.1,540.0 287.1,546.8 289.6,551.1C292.1,555.4 295.3,558.1 299.1,559.7C302.9,561.3 307.7,561.8 312.5,560.7C317.3,559.6 322.6,555.5 327.7,553.0C332.8,550.5 340.4,546.7 343.0,545.4"/>
<path fill="none" stroke="#aad3df" stroke-width="1.6" stroke-linecap="round" stroke-linejoin="round" d="M263.9,492.1C260.6,491.1 251.4,487.0 243.9,486.0C236.4,485.0 228.0,485.0 219.1,486.0C210.2,487.0 201.6,489.0 190.5,492.1C179.4,495.2 166.7,498.9 152.4,504.4C138.1,509.8 120.0,519.5 104.8,524.8C89.5,530.1 75.2,532.2 60.9,536.3C46.6,540.4 26.0,547.1 19.0,549.2 M343.0,545.4C344.9,543.8 350.6,539.7 354.4,535.9C358.2,532.1 362.5,525.6 365.9,522.6C369.3,519.6 373.5,518.6 375.0,517.8 M731.0,572.1C728.8,571.5 723.3,569.2 718.0,568.3C712.7,567.3 705.4,567.7 699.0,566.4C692.6,565.1 685.6,561.3 679.9,560.7C674.2,560.1 669.5,561.3 664.7,562.6C659.9,563.9 656.7,566.1 651.3,568.3C645.9,570.5 636.7,572.1 632.3,575.9C627.9,579.7 626.3,586.4 624.7,591.2C623.1,596.0 625.3,602.0 622.8,604.5C620.2,607.0 614.8,605.4 609.4,606.4C604.0,607.4 597.7,610.5 590.4,610.2C583.1,609.9 571.6,604.5 565.6,604.5C559.6,604.5 558.2,607.7 554.1,610.2C550.0,612.7 545.2,617.8 540.8,619.7C536.4,621.6 531.3,623.3 527.5,621.7C523.7,620.1 521.7,613.4 517.9,610.2C514.1,607.0 508.7,605.8 504.6,602.6C500.5,599.4 497.0,593.8 493.2,591.2C489.4,588.7 483.6,587.9 481.7,587.3 M506.5,606.4C506.2,609.6 502.4,621.0 504.6,625.5C506.8,630.0 516.9,629.9 519.8,633.1C522.6,636.3 523.0,640.0 521.7,644.5C520.4,649.0 513.8,657.4 512.2,660.0 M375.0,514.9C376.9,514.3 382.6,513.3 386.4,511.1C390.2,508.9 394.1,505.7 397.9,501.6C401.7,497.5 405.8,491.1 409.3,486.3C412.8,481.5 417.2,475.2 418.8,473.0 M676.1,562.6C678.0,566.7 684.6,580.0 687.5,587.3C690.4,594.6 691.7,600.0 693.3,606.4C694.9,612.8 696.8,619.1 697.1,625.5C697.4,631.9 694.9,638.8 695.2,644.5C695.5,650.2 698.4,657.4 699.0,660.0 M422.6,572.1C424.2,571.5 429.6,568.0 432.2,568.3C434.8,568.6 438.2,572.1 437.9,574.0C437.6,575.9 431.6,578.8 430.3,579.7 M731.0,579.7C732.0,581.0 735.1,584.4 736.7,587.3C738.3,590.2 740.5,593.1 740.5,596.9C740.5,600.7 737.0,605.4 736.7,610.2C736.4,615.0 738.9,621.0 738.6,625.5C738.3,630.0 734.2,633.1 734.8,636.9C735.4,640.7 739.5,645.1 742.4,648.3C745.3,651.5 748.8,654.0 752.0,656.0C755.2,658.0 759.9,659.3 761.5,660.0 M784.4,660.0C785.0,657.4 785.7,648.4 788.2,644.5C790.7,640.6 793.9,639.4 799.6,636.9C805.3,634.4 816.1,631.5 822.5,629.3C828.9,627.1 832.6,625.8 837.7,623.6C842.8,621.4 848.9,616.9 853.0,615.9C857.1,614.9 860.6,616.2 862.5,617.8C864.4,619.4 861.5,623.9 864.4,625.5C867.3,627.1 875.9,625.5 879.7,627.4C883.5,629.3 885.4,634.4 887.3,636.9C889.2,639.4 888.6,642.0 891.1,642.6C893.6,643.2 899.3,641.3 902.5,640.7C905.7,640.1 908.8,639.1 910.1,638.8 M1009.2,581.6C1010.5,583.2 1014.7,587.1 1016.9,591.2C1019.1,595.3 1020.4,602.0 1022.6,606.4C1024.8,610.8 1028.3,617.8 1030.2,617.8C1032.1,617.8 1031.5,609.9 1034.0,606.4C1036.5,602.9 1041.4,599.1 1045.5,596.9C1049.6,594.7 1055.3,591.8 1058.8,593.1C1062.3,594.4 1063.2,603.2 1066.4,604.5C1069.6,605.8 1074.5,601.0 1077.9,600.7C1081.3,600.4 1085.5,602.3 1087.0,602.6 M95.2,660.0C96.2,661.9 98.7,666.9 100.9,671.4C103.1,675.9 106.7,681.0 108.6,686.7C110.5,692.4 110.2,700.3 112.4,705.7C114.6,711.1 117.8,716.4 121.9,719.1C126.0,721.8 132.1,721.6 137.2,721.9C142.3,722.2 149.9,721.1 152.4,721.0 M19.0,804.8C20.3,807.0 24.4,813.8 26.6,818.2C28.8,822.7 30.1,826.7 32.3,831.5C34.5,836.3 38.7,844.4 40.0,847.0 M367.8,789.6 L375.0,793.4 M375.0,804.8C373.5,807.0 368.1,813.8 365.9,818.2C363.7,822.7 363.9,826.7 362.0,831.5C360.1,836.3 355.7,844.4 354.4,847.0 M380.7,684.8C381.3,687.0 382.9,694.3 384.5,698.1C386.1,701.9 389.9,704.4 390.2,707.6C390.5,710.8 387.0,715.6 386.4,717.2 M394.1,722.9C396.0,723.5 401.4,726.7 405.5,726.7C409.6,726.7 414.7,722.9 418.8,722.9C422.9,722.9 430.0,724.5 430.3,726.7C430.6,728.9 423.2,733.3 420.7,736.2C418.1,739.1 415.0,740.7 415.0,743.9C415.0,747.1 420.4,751.5 420.7,755.3C421.0,759.1 419.8,764.2 416.9,766.7C414.0,769.2 407.7,768.6 403.6,770.5C399.5,772.4 396.0,776.3 392.2,778.2C388.4,780.1 383.6,779.5 380.7,782.0C377.8,784.5 375.9,791.5 375.0,793.4 M508.4,663.8C508.1,666.3 505.2,674.3 506.5,679.1C507.8,683.9 512.5,689.2 516.0,692.4C519.5,695.6 524.0,695.9 527.5,698.1C531.0,700.3 533.8,703.5 537.0,705.7C540.2,707.9 543.6,710.4 546.5,711.5C549.4,712.6 552.8,712.2 554.1,712.4 M375.0,665.7C375.9,666.7 380.1,668.9 380.7,671.4C381.3,673.9 379.1,679.4 378.8,681.0 M896.8,847.0C899.0,846.3 906.0,844.6 910.1,843.0C914.2,841.4 917.8,839.4 921.6,837.2C925.4,835.0 929.2,831.5 933.0,829.6C936.8,827.7 940.6,827.7 944.4,825.8C948.2,823.9 952.1,819.8 955.9,818.2C959.7,816.6 962.5,816.3 967.3,816.3C972.1,816.3 979.4,816.9 984.5,818.2C989.6,819.5 994.3,822.3 997.8,823.9C1001.3,825.5 1002.2,827.7 1005.4,827.7C1008.6,827.7 1013.1,825.2 1016.9,823.9C1020.7,822.6 1024.5,822.0 1028.3,820.1C1032.1,818.2 1035.9,814.7 1039.7,812.5C1043.5,810.3 1048.0,809.2 1051.2,806.7C1054.4,804.2 1056.0,800.1 1058.8,797.2C1061.6,794.4 1066.1,792.8 1068.3,789.6C1070.5,786.4 1070.8,781.7 1072.1,778.2C1073.4,774.7 1073.4,771.8 1075.9,768.6C1078.4,765.4 1085.2,760.7 1087.0,759.1 M988.3,804.8C988.9,802.6 989.2,795.3 992.1,791.5C995.0,787.7 1001.6,785.0 1005.4,782.0C1009.2,779.0 1013.4,774.8 1015.0,773.4 M753.9,660.0C754.5,660.3 754.9,661.9 757.7,661.9C760.6,661.9 768.8,660.3 771.0,660.0 M354.8,845.5C355.7,847.3 360.5,852.1 360.1,856.5C359.7,860.9 354.7,867.0 352.5,871.8C350.3,876.6 346.8,880.3 346.8,885.1C346.8,889.9 351.9,896.0 352.5,900.4C353.1,904.8 350.9,909.9 350.6,911.8 M40.3,845.5C40.6,846.7 41.3,848.0 41.9,852.7C42.5,857.4 41.9,866.7 43.8,873.7C45.7,880.7 51.1,887.0 53.3,894.6C55.5,902.2 56.5,912.1 57.1,919.4C57.7,926.7 56.2,934.7 57.1,938.5C58.0,942.3 61.8,941.7 62.8,942.3 M517.9,864.2C516.3,865.5 511.6,868.6 508.4,871.8C505.2,875.0 500.2,879.4 498.9,883.2C497.6,887.0 497.9,891.4 500.8,894.6C503.7,897.8 514.7,899.1 516.0,902.3C517.3,905.5 510.0,910.2 508.4,913.7C506.8,917.2 506.8,921.6 506.5,923.2 M493.2,978.5C491.3,980.1 484.6,983.5 481.7,988.0C478.8,992.5 477.9,1000.1 476.0,1005.2C474.1,1010.3 472.8,1013.4 470.3,1018.5C467.8,1023.6 462.4,1032.8 460.8,1035.7 M853.0,873.7C854.9,872.8 860.6,870.5 864.4,868.0C868.2,865.5 871.3,860.3 875.8,858.4C880.2,856.5 887.3,858.4 891.1,856.5C894.9,854.6 897.4,848.6 898.7,847.0 M971.1,911.8C972.7,912.4 978.8,913.7 980.7,915.6C982.6,917.5 982.3,921.9 982.6,923.2"/>
<path fill="none" stroke="#a9bfdc" stroke-width="1.6" stroke-linejoin="round" d="M352.5,604.5C354.1,606.7 360.7,613.3 362.0,617.8C363.3,622.2 358.5,627.7 360.1,631.2C361.7,634.7 369.1,636.6 371.6,638.8C374.1,641.0 374.4,643.5 375.0,644.5 M910.1,640.7C912.0,640.4 917.8,638.5 921.6,638.8C925.4,639.1 929.5,642.3 933.0,642.6C936.5,642.9 939.3,642.6 942.5,640.7C945.7,638.8 949.9,635.3 952.1,631.2C954.3,627.1 952.1,619.4 955.9,615.9C959.7,612.4 971.1,613.4 974.9,610.2C978.7,607.0 976.9,600.1 978.8,596.9C980.7,593.7 983.5,593.8 986.4,591.2C989.2,588.7 992.1,583.2 995.9,581.6C999.7,580.0 1007.0,581.6 1009.2,581.6 M167.7,717.2C170.9,718.2 182.3,720.0 186.7,722.9C191.1,725.8 192.1,730.8 194.3,734.3C196.5,737.8 197.8,740.4 200.0,743.9C202.2,747.4 205.8,751.8 207.7,755.3C209.6,758.8 208.3,762.3 211.5,764.8C214.7,767.3 222.2,769.5 226.7,770.5C231.1,771.5 236.3,770.5 238.2,770.5 M506.5,923.2C504.9,926.4 497.0,937.8 497.0,942.3C497.0,946.8 506.5,946.7 506.5,949.9C506.5,953.1 499.2,956.5 497.0,961.3C494.8,966.1 493.8,975.6 493.2,978.5 M778.6,885.1C780.8,887.0 790.1,892.8 792.0,896.6C793.9,900.4 789.8,904.8 790.1,908.0C790.4,911.2 796.1,913.7 793.9,915.6C791.7,917.5 780.8,918.1 776.7,919.4C772.6,920.7 770.4,922.6 769.1,923.2 M792.0,896.6C794.5,895.0 802.1,889.9 807.2,887.0C812.3,884.1 818.7,882.2 822.5,879.4C826.3,876.5 826.9,870.8 830.1,869.9C833.3,869.0 837.7,873.1 841.5,873.7C845.3,874.3 851.1,873.7 853.0,873.7"/>
<path fill="none" stroke="#8f86c0" stroke-opacity=".85" stroke-width="1.3" stroke-dasharray="4 2 1 2" d="M352.5,604.5C354.1,606.7 360.7,613.3 362.0,617.8C363.3,622.2 358.5,627.7 360.1,631.2C361.7,634.7 369.1,636.6 371.6,638.8C374.1,641.0 374.4,643.5 375.0,644.5 M910.1,640.7C912.0,640.4 917.8,638.5 921.6,638.8C925.4,639.1 929.5,642.3 933.0,642.6C936.5,642.9 939.3,642.6 942.5,640.7C945.7,638.8 949.9,635.3 952.1,631.2C954.3,627.1 952.1,619.4 955.9,615.9C959.7,612.4 971.1,613.4 974.9,610.2C978.7,607.0 976.9,600.1 978.8,596.9C980.7,593.7 983.5,593.8 986.4,591.2C989.2,588.7 992.1,583.2 995.9,581.6C999.7,580.0 1007.0,581.6 1009.2,581.6 M167.7,717.2C170.9,718.2 182.3,720.0 186.7,722.9C191.1,725.8 192.1,730.8 194.3,734.3C196.5,737.8 197.8,740.4 200.0,743.9C202.2,747.4 205.8,751.8 207.7,755.3C209.6,758.8 208.3,762.3 211.5,764.8C214.7,767.3 222.2,769.5 226.7,770.5C231.1,771.5 236.3,770.5 238.2,770.5 M506.5,923.2C504.9,926.4 497.0,937.8 497.0,942.3C497.0,946.8 506.5,946.7 506.5,949.9C506.5,953.1 499.2,956.5 497.0,961.3C494.8,966.1 493.8,975.6 493.2,978.5 M778.6,885.1C780.8,887.0 790.1,892.8 792.0,896.6C793.9,900.4 789.8,904.8 790.1,908.0C790.4,911.2 796.1,913.7 793.9,915.6C791.7,917.5 780.8,918.1 776.7,919.4C772.6,920.7 770.4,922.6 769.1,923.2 M792.0,896.6C794.5,895.0 802.1,889.9 807.2,887.0C812.3,884.1 818.7,882.2 822.5,879.4C826.3,876.5 826.9,870.8 830.1,869.9C833.3,869.0 837.7,873.1 841.5,873.7C845.3,874.3 851.1,873.7 853.0,873.7 M1087.0,854.6C1084.8,854.6 1078.1,853.0 1074.0,854.6C1069.9,856.2 1065.1,860.4 1062.6,864.2C1060.1,868.0 1060.7,874.0 1058.8,877.5C1056.9,881.0 1053.4,881.9 1051.2,885.1C1049.0,888.3 1048.4,894.4 1045.5,896.6C1042.6,898.8 1037.5,898.5 1034.0,898.5C1030.5,898.5 1027.0,895.6 1024.5,896.6C1022.0,897.6 1022.0,903.2 1018.8,904.2C1015.6,905.2 1009.2,902.9 1005.4,902.3C1001.6,901.7 999.7,900.1 995.9,900.4C992.1,900.7 986.7,903.9 982.6,904.2C978.5,904.5 973.3,901.0 971.1,902.3C968.9,903.6 970.2,908.3 969.2,911.8C968.2,915.3 967.3,920.0 965.4,923.2C963.5,926.4 959.4,927.7 957.8,930.9C956.2,934.1 957.2,940.4 955.9,942.3C954.6,944.2 952.1,944.2 950.2,942.3C948.3,940.4 947.0,933.8 944.4,930.9C941.8,928.0 938.4,926.1 934.9,925.1C931.4,924.1 927.0,924.1 923.5,925.1C920.0,926.1 915.6,928.0 914.0,930.9C912.4,933.8 914.6,939.8 914.0,942.3C913.4,944.8 912.6,946.7 910.1,946.1C907.6,945.5 901.9,941.7 898.7,938.5C895.5,935.3 894.0,929.2 891.1,927.0C888.2,924.8 883.2,924.1 881.6,925.1C880.0,926.1 880.3,930.6 881.6,932.8C882.9,935.0 886.7,936.3 889.2,938.5C891.7,940.7 895.5,944.8 896.8,946.1 M860.6,933.7C859.6,933.6 856.8,932.0 854.9,932.8C853.0,933.6 850.5,935.3 849.2,938.5C847.9,941.7 846.7,947.3 847.3,951.8C847.9,956.2 851.4,961.1 853.0,965.2C854.6,969.3 857.8,974.1 856.8,976.6C855.8,979.1 850.5,981.0 847.3,980.4C844.1,979.8 841.2,974.7 837.7,972.8C834.2,970.9 829.1,971.9 826.3,969.0C823.4,966.1 822.5,955.6 820.6,955.6C818.7,955.6 816.5,964.2 814.9,969.0C813.3,973.8 812.6,980.7 811.0,984.2C809.4,987.7 808.1,989.6 805.3,989.9C802.4,990.2 797.4,987.7 793.9,986.1C790.4,984.5 787.3,982.9 784.4,980.4C781.5,977.9 778.6,970.3 776.7,970.9C774.8,971.5 773.2,979.8 772.9,984.2C772.6,988.7 773.2,994.4 774.8,997.6C776.4,1000.8 782.2,1000.8 782.5,1003.3C782.8,1005.8 779.6,1010.6 776.7,1012.8C773.8,1015.0 769.7,1016.9 765.3,1016.6C760.9,1016.3 754.5,1013.1 750.1,1010.9C745.7,1008.7 741.8,1004.9 738.6,1003.3C735.4,1001.7 732.3,1001.7 731.0,1001.4 M769.1,923.2C769.4,925.4 769.7,933.1 771.0,936.6C772.3,940.1 778.3,941.4 776.7,944.2C775.1,947.1 765.9,950.9 761.5,953.7C757.1,956.6 752.0,958.1 750.1,961.3C748.2,964.5 751.4,969.6 750.1,972.8C748.8,976.0 745.6,977.2 742.4,980.4C739.2,983.6 732.9,989.9 731.0,991.8"/>
<path fill="none" stroke="#ba9bc6" stroke-width="1.3" stroke-dasharray="5 2 1.2 2" d="M81.9,530.2C82.5,533.4 85.7,543.8 85.7,549.2C85.7,554.6 80.3,556.2 81.9,562.6C83.5,569.0 91.7,578.7 95.2,587.3C98.7,595.9 102.9,605.7 102.9,614.0C102.9,622.3 99.7,631.8 95.2,636.9C90.8,642.0 81.9,642.3 76.2,644.5C70.5,646.7 63.5,649.2 60.9,650.2 M106.7,564.5C109.2,567.0 116.2,576.2 121.9,579.7C127.6,583.2 134.7,582.5 141.0,585.4C147.3,588.3 154.9,594.7 160.0,596.9C165.1,599.1 166.4,600.1 171.5,598.8C176.6,597.5 186.4,589.9 190.5,589.3C194.6,588.7 195.6,590.6 196.2,595.0C196.8,599.4 195.9,611.1 194.3,615.9C192.7,620.7 188.0,622.3 186.7,623.6 M95.2,490.2 L102.9,518.7 M396.0,473.0C397.6,474.9 402.6,480.9 405.5,484.4C408.4,487.9 408.0,490.2 413.1,494.0C418.2,497.8 431.9,502.5 436.0,507.3C440.1,512.1 436.3,517.8 437.9,522.6C439.5,527.4 442.6,530.8 445.5,535.9C448.4,541.0 451.8,547.6 455.0,553.0C458.2,558.4 460.8,562.9 464.6,568.3C468.4,573.7 475.0,580.9 477.9,585.4C480.8,589.9 481.4,590.9 481.7,595.0C482.0,599.1 481.4,605.8 479.8,610.2C478.2,614.7 472.8,617.2 472.2,621.7C471.6,626.2 476.6,630.5 476.0,636.9C475.4,643.3 469.7,656.1 468.4,660.0 M396.0,534.0C398.9,534.3 405.8,534.9 413.1,535.9C420.4,536.9 433.5,537.5 439.8,539.7C446.1,541.9 449.3,547.6 451.2,549.2 M451.2,556.9C456.3,555.9 474.1,552.7 481.7,551.1C489.3,549.5 491.3,547.3 497.0,547.3C502.7,547.3 510.9,548.9 516.0,551.1C521.1,553.3 523.0,557.8 527.5,560.7C532.0,563.6 536.4,568.0 542.7,568.3C549.1,568.6 559.2,564.8 565.6,562.6C572.0,560.4 575.1,558.1 580.8,554.9C586.5,551.7 595.4,547.6 599.9,543.5C604.4,539.4 603.7,534.0 607.5,530.2C611.3,526.4 615.8,523.5 622.8,520.6C629.8,517.7 645.0,520.9 649.4,513.0C653.8,505.1 649.4,479.7 649.4,473.0 M649.4,513.0C649.7,515.9 649.4,524.8 651.3,530.2C653.2,535.6 660.3,539.0 660.9,545.4C661.5,551.8 657.0,562.6 655.1,568.3C653.2,574.0 646.5,574.9 649.4,579.7C652.3,584.5 667.2,590.5 672.3,596.9C677.4,603.2 679.9,610.5 679.9,617.8C679.9,625.1 674.2,633.7 672.3,640.7C670.4,647.7 669.1,656.8 668.5,660.0 M649.4,503.5C651.3,502.9 655.2,500.0 660.9,499.7C666.6,499.4 676.1,500.7 683.7,501.6C691.3,502.6 699.9,503.2 706.6,505.4C713.3,507.6 720.3,511.1 723.8,514.9C727.3,518.7 727.0,526.1 727.6,528.3 M375.0,593.1C377.5,594.7 387.3,599.8 390.2,602.6C393.1,605.5 391.9,608.9 392.2,610.2 M731.0,529.2C735.8,528.1 753.2,520.5 759.6,522.6C766.0,524.7 765.3,537.5 769.1,541.6C772.9,545.7 780.0,543.8 782.5,547.3C785.0,550.8 782.5,557.8 784.4,562.6C786.3,567.4 789.5,572.1 793.9,575.9C798.3,579.7 806.2,585.1 811.0,585.4C815.8,585.7 818.0,578.4 822.5,577.8C827.0,577.2 832.0,582.2 837.7,581.6C843.4,581.0 849.8,574.8 856.8,574.0C863.8,573.2 873.4,576.9 879.7,576.9C886.1,576.9 891.6,578.3 894.9,574.0C898.2,569.7 897.6,556.0 899.7,551.1C901.8,546.2 904.0,543.2 907.3,544.5C910.6,545.8 916.7,553.9 919.7,558.8C922.7,563.7 925.1,568.0 925.4,574.0C925.7,580.0 923.5,587.4 921.6,595.0C919.7,602.6 915.3,612.4 914.0,619.7C912.7,627.0 914.0,635.6 914.0,638.8 M938.7,644.5C939.3,646.1 940.3,651.4 942.5,654.0C944.7,656.6 950.5,659.0 952.1,660.0 M1009.2,581.6C1013.0,579.4 1026.0,573.7 1032.1,568.3C1038.1,562.9 1043.0,553.0 1045.5,549.2C1048.0,545.4 1047.1,546.0 1047.4,545.4 M1083.6,507.3C1083.3,511.1 1081.1,525.1 1081.7,530.2C1082.3,535.3 1086.1,536.5 1087.0,537.8 M62.8,742.9C67.2,743.1 84.1,741.2 89.5,743.9C94.9,746.6 93.0,754.0 95.2,759.1C97.4,764.2 100.4,768.6 102.9,774.3C105.5,780.0 108.0,787.0 110.5,793.4C113.0,799.8 111.1,809.6 118.1,812.5C125.1,815.4 142.2,810.3 152.4,810.6C162.6,810.9 174.0,810.9 179.1,814.4C184.2,817.9 181.9,826.1 182.9,831.5C183.9,836.9 184.5,844.4 184.8,847.0 M236.3,743.9C238.2,743.9 242.9,742.3 247.7,743.9C252.4,745.5 261.0,749.6 264.8,753.4C268.6,757.2 267.1,766.1 270.6,766.7C274.1,767.3 280.1,760.1 285.8,757.2C291.5,754.4 298.9,752.2 304.9,749.6C310.9,747.0 320.1,747.3 322.0,741.9C323.9,736.5 318.2,724.5 316.3,717.2C314.4,709.9 311.9,704.5 310.6,698.1C309.3,691.8 309.0,682.3 308.7,679.1 M243.9,766.7C246.1,769.2 252.4,777.5 257.2,782.0C262.0,786.5 268.4,788.9 272.5,793.4C276.6,797.9 281.4,803.0 282.0,808.7C282.6,814.4 279.2,823.6 276.3,827.7C273.4,831.8 270.2,833.4 264.8,833.4C259.4,833.4 252.5,829.6 243.9,827.7C235.3,825.8 218.8,819.8 213.4,822.0C208.0,824.2 211.8,837.8 211.5,841.0 M325.8,753.4C327.4,755.9 331.9,764.5 335.4,768.6C338.9,772.7 344.9,776.6 346.8,778.2 M179.1,660.0C179.7,661.9 177.8,668.2 182.9,671.4C188.0,674.6 202.3,676.2 209.6,679.1C216.9,682.0 222.9,688.3 226.7,688.6C230.5,688.9 225.7,682.0 232.4,681.0C239.1,680.0 257.9,683.2 266.8,682.9C275.7,682.6 278.8,679.7 285.8,679.1C292.8,678.5 304.9,679.1 308.7,679.1 M316.3,713.4C320.8,711.5 336.0,706.0 343.0,701.9C350.0,697.8 352.9,691.8 358.2,688.6C363.5,685.4 372.2,683.9 375.0,682.9 M45.7,675.2C46.0,677.8 46.3,690.5 47.6,690.5C48.9,690.5 52.3,677.8 53.3,675.2 M448.4,681.0 L464.6,679.1 M448.4,681.0C450.1,683.9 455.2,693.3 458.9,698.1C462.5,702.9 468.4,705.5 470.3,709.6C472.2,713.7 468.4,720.0 470.3,722.9C472.2,725.8 477.9,724.8 481.7,726.7C485.5,728.6 488.8,732.1 493.2,734.3C497.6,736.5 504.0,738.1 508.4,740.0C512.8,741.9 516.6,742.6 519.8,745.8C523.0,749.0 525.3,755.3 527.5,759.1C529.7,762.9 530.0,765.7 533.2,768.6C536.4,771.5 541.1,773.8 546.5,776.3C551.9,778.8 559.2,780.4 565.6,783.9C572.0,787.4 578.9,793.1 584.6,797.2C590.3,801.3 595.1,805.5 599.9,808.7C604.7,811.9 609.4,813.8 613.2,816.3C617.0,818.8 621.5,818.8 622.8,823.9C624.1,829.0 621.1,843.1 620.8,847.0 M657.1,660.0C656.8,663.8 657.7,674.6 655.1,682.9C652.5,691.2 644.3,702.6 641.8,709.6C639.3,716.6 639.9,720.7 639.9,724.8C639.9,728.9 643.4,730.2 641.8,734.3C640.2,738.4 633.9,743.6 630.4,749.6C626.9,755.6 625.9,763.5 620.8,770.5C615.7,777.5 603.4,785.1 599.9,791.5C596.4,797.9 599.9,805.8 599.9,808.7 M641.8,734.3C644.3,735.6 653.0,738.7 657.1,741.9C661.2,745.1 663.1,749.9 666.6,753.4C670.1,756.9 673.9,760.7 678.0,762.9C682.1,765.1 688.9,763.5 691.4,766.7C693.9,769.9 693.9,776.3 693.3,782.0C692.6,787.7 689.7,794.3 687.5,801.0C685.3,807.7 681.2,814.3 679.9,822.0C678.6,829.7 679.9,842.8 679.9,847.0 M375.0,802.9C378.2,804.2 387.8,807.4 394.1,810.6C400.5,813.8 405.2,817.6 413.1,822.0C421.0,826.4 432.2,833.4 441.7,837.2C451.2,841.0 465.5,843.6 470.3,844.9 M546.5,778.2C545.9,780.7 547.2,789.3 542.7,793.4C538.2,797.5 526.1,799.7 519.8,802.9C513.4,806.1 508.4,807.7 504.6,812.5C500.8,817.3 499.9,825.8 497.0,831.5C494.1,837.2 489.0,844.4 487.4,847.0 M599.9,808.7C598.0,811.9 592.8,821.3 588.4,827.7C584.0,834.1 575.7,843.8 573.2,847.0 M952.1,660.0C952.7,661.9 953.7,668.2 955.9,671.4C958.1,674.6 961.9,677.5 965.4,679.1C968.9,680.7 975.2,679.1 976.8,681.0C978.4,682.9 976.5,686.7 974.9,690.5C973.3,694.3 970.5,701.1 967.3,703.8C964.1,706.5 960.3,706.4 955.9,706.7C951.5,707.0 945.7,707.5 940.6,705.7C935.5,704.0 930.2,698.7 925.4,696.2C920.6,693.7 916.5,692.1 912.0,690.5C907.5,688.9 904.1,686.7 898.7,686.7C893.3,686.7 885.4,689.2 879.7,690.5C874.0,691.8 870.1,693.3 864.4,694.3C858.7,695.2 851.0,693.7 845.3,696.2C839.6,698.8 834.5,706.1 830.1,709.6C825.7,713.1 821.6,712.8 818.7,717.2C815.8,721.6 811.6,731.8 812.9,736.2C814.2,740.7 821.7,741.0 826.3,743.9C830.9,746.8 838.1,748.3 840.6,753.4C843.1,758.5 840.1,767.6 841.5,774.3C842.9,781.0 847.0,787.7 849.2,793.4C851.4,799.1 853.6,803.0 854.9,808.7C856.2,814.4 856.5,821.3 856.8,827.7C857.1,834.1 856.8,843.8 856.8,847.0 M1087.0,810.6C1084.8,811.9 1079.3,816.3 1074.0,818.2C1068.7,820.1 1060.7,820.7 1055.0,822.0C1049.3,823.3 1044.2,822.9 1039.7,825.8C1035.2,828.6 1030.8,835.6 1028.3,839.1C1025.8,842.6 1025.1,845.7 1024.5,847.0 M43.8,850.8C50.5,850.8 74.9,849.5 83.8,850.8C92.7,852.1 94.6,852.7 97.1,858.4C99.6,864.1 98.0,874.3 99.0,885.1C100.0,895.9 101.5,914.0 102.9,923.2C104.3,932.4 108.2,935.0 107.6,940.4C106.9,945.8 100.8,950.2 99.0,955.6C97.2,961.0 96.4,967.7 97.1,972.8C97.8,977.9 99.4,981.3 102.9,986.1C106.4,990.9 113.7,996.6 118.1,1001.4C122.5,1006.2 127.0,1009.1 129.5,1014.7C132.0,1020.3 132.7,1031.5 133.3,1034.9 M43.8,850.8C41.6,852.4 33.6,855.2 30.4,860.3C27.2,865.4 26.6,876.5 24.7,881.3C22.8,886.1 19.9,887.6 19.0,888.9 M118.1,1001.4C120.6,998.5 129.5,990.9 133.3,984.2C137.1,977.5 139.2,968.3 141.0,961.3C142.8,954.3 143.8,946.7 143.8,942.3C143.8,937.9 137.7,936.3 141.0,934.7C144.3,933.1 156.2,933.8 163.8,932.8C171.4,931.8 181.6,931.4 186.7,928.9C191.8,926.4 189.9,921.3 194.3,917.5C198.8,913.7 207.1,910.6 213.4,906.1C219.8,901.6 228.6,896.2 232.4,890.8C236.2,885.4 236.3,879.4 236.3,873.7C236.3,868.0 234.3,858.1 232.4,856.5C230.5,854.9 228.0,863.9 224.8,864.2C221.6,864.5 215.6,861.3 213.4,858.4C211.2,855.5 211.8,848.9 211.5,847.0 M236.3,873.7C239.8,875.6 251.2,880.3 257.2,885.1C263.2,889.9 268.4,898.8 272.5,902.3C276.6,905.8 280.4,908.0 282.0,906.1C283.6,904.2 283.6,893.7 282.0,890.8C280.4,887.9 275.4,892.1 272.5,888.9C269.6,885.7 265.4,876.6 264.8,871.8C264.2,867.0 266.5,863.2 268.7,860.3C270.9,857.4 274.7,854.6 278.2,854.6C281.7,854.6 285.8,856.5 289.6,860.3C293.4,864.1 297.3,871.8 301.1,877.5C304.9,883.2 309.6,889.2 312.5,894.6C315.4,900.0 316.9,904.2 318.2,909.9C319.5,915.6 320.4,923.2 320.1,928.9C319.8,934.6 314.4,939.8 316.3,944.2C318.2,948.7 327.1,950.2 331.5,955.6C335.9,961.0 340.1,970.6 343.0,976.6C345.9,982.6 350.6,988.3 348.7,991.8C346.8,995.3 334.7,992.2 331.5,997.6C328.3,1003.0 333.4,1018.8 329.6,1024.2C325.8,1029.6 312.5,1028.2 308.7,1030.0C304.9,1031.8 307.1,1034.1 306.8,1034.9 M470.3,847.0C472.5,848.3 480.1,854.6 483.6,854.6C487.1,854.6 490.0,848.3 491.3,847.0 M468.4,873.7C468.7,876.2 468.1,883.5 470.3,888.9C472.5,894.3 477.9,900.7 481.7,906.1C485.5,911.5 489.1,918.3 493.2,921.3C497.3,924.3 504.3,923.7 506.5,924.2 M447.4,925.1C448.3,929.2 449.3,944.2 453.1,949.9C456.9,955.6 464.6,956.2 470.3,959.4C476.0,962.6 483.6,965.8 487.4,969.0C491.2,972.2 492.2,976.9 493.2,978.5 M447.4,925.1C445.5,927.0 437.6,932.5 436.0,936.6C434.4,940.7 439.5,945.8 437.9,949.9C436.3,954.0 428.1,957.5 426.5,961.3C424.9,965.1 430.3,969.6 428.4,972.8C426.5,976.0 417.9,977.2 415.0,980.4C412.1,983.6 413.7,988.6 411.2,991.8C408.7,995.0 404.9,995.0 399.8,999.5C394.7,1004.0 384.8,1012.6 380.7,1018.5C376.6,1024.4 375.9,1032.2 375.0,1034.9 M573.2,847.0C571.6,849.2 565.6,853.9 563.7,860.3C561.8,866.6 563.1,876.8 561.8,885.1C560.5,893.4 557.0,901.3 556.0,909.9C555.0,918.5 555.0,929.3 556.0,936.6C557.0,943.9 561.5,948.3 561.8,953.7C562.1,959.1 559.9,963.9 558.0,969.0C556.1,974.1 554.1,979.4 550.3,984.2C546.5,989.0 538.3,992.5 535.1,997.6C531.9,1002.7 531.6,1009.6 531.3,1014.7C531.0,1019.8 532.9,1025.8 533.2,1028.0 M550.3,984.2C553.5,984.2 565.6,982.0 569.4,984.2C573.2,986.4 570.4,993.8 573.2,997.6C576.1,1001.4 582.4,1007.4 586.5,1007.1C590.6,1006.8 595.1,999.5 598.0,995.7C600.9,991.9 599.9,988.0 603.7,984.2C607.5,980.4 616.7,976.9 620.8,972.8C624.9,968.7 627.5,964.5 628.5,959.4C629.5,954.3 625.6,948.6 626.6,942.3C627.6,935.9 630.4,927.0 634.2,921.3C638.0,915.6 645.6,911.5 649.4,908.0C653.2,904.5 656.8,904.2 657.1,900.4C657.4,896.6 652.6,890.2 651.3,885.1C650.0,880.0 649.4,876.2 649.4,869.9C649.4,863.5 651.0,850.8 651.3,847.0 M674.2,847.0C674.8,849.9 674.5,858.2 678.0,864.2C681.5,870.2 691.7,876.9 695.2,883.2C698.7,889.6 695.2,895.9 699.0,902.3C702.8,908.6 713.5,915.9 718.0,921.3C722.5,926.7 724.4,932.5 725.7,934.7 M394.1,999.5C395.7,1003.6 401.4,1018.3 403.6,1024.2C405.8,1030.1 406.8,1033.1 407.4,1034.9 M854.9,847.0 L854.9,871.8 M1028.3,847.0C1029.6,849.5 1034.0,856.5 1035.9,862.2C1037.8,867.9 1038.1,875.9 1039.7,881.3C1041.3,886.7 1044.5,892.4 1045.5,894.6 M776.7,1012.8C778.6,1015.7 785.7,1026.3 788.2,1030.0C790.8,1033.7 791.4,1034.1 792.0,1034.9 M731.0,938.5C732.3,941.0 737.0,948.6 738.6,953.7C740.2,958.8 740.2,966.5 740.5,969.0"/>
<path fill="none" stroke="#c2c1bd" stroke-width=".8" d="M163.8,530.2C162.9,532.7 157.4,537.1 158.1,545.4C158.8,553.6 165.5,571.4 167.7,579.7C169.9,588.0 172.8,590.5 171.5,595.0C170.2,599.5 161.9,601.3 160.0,606.4C158.1,611.5 160.0,622.3 160.0,625.5 M190.5,549.2C191.8,553.0 194.9,566.4 198.1,572.1C201.3,577.8 204.8,581.3 209.6,583.5C214.4,585.7 222.6,583.5 226.7,585.4C230.8,587.3 233.1,593.4 234.4,595.0 M234.4,595.0C239.8,594.7 257.6,593.7 266.8,593.1C276.0,592.5 283.2,590.9 289.6,591.2C296.0,591.5 301.1,596.9 304.9,595.0C308.7,593.1 309.3,582.9 312.5,579.7C315.7,576.5 322.0,576.5 323.9,575.9 M257.2,562.6C258.5,566.7 261.9,580.0 264.8,587.3C267.7,594.6 269.6,601.9 274.4,606.4C279.2,610.9 288.3,608.9 293.4,614.0C298.5,619.1 301.1,629.2 304.9,636.9C308.7,644.6 314.4,656.1 316.3,660.0 M219.1,640.7C222.6,640.7 236.0,637.5 240.1,640.7C244.2,643.9 243.3,656.8 243.9,660.0 M62.8,604.5C65.0,607.4 68.9,615.0 76.2,621.7C83.5,628.4 98.5,638.1 106.7,644.5C115.0,650.9 122.5,657.4 125.7,660.0 M19.0,595.0C22.8,596.9 34.6,604.8 41.9,606.4C49.2,608.0 59.3,604.8 62.8,604.5 M453.1,478.7C451.5,481.6 445.5,490.5 443.6,495.9C441.7,501.3 447.4,507.6 441.7,511.1C436.0,514.6 416.6,513.6 409.3,516.8C402.0,520.0 403.6,527.0 397.9,530.2C392.2,533.4 378.8,535.0 375.0,535.9 M487.4,478.7C484.5,480.0 475.1,486.0 470.3,486.3C465.6,486.6 460.8,481.6 458.9,480.6 M441.7,511.1C443.3,515.2 451.8,527.6 451.2,535.9C450.6,544.2 440.1,556.6 437.9,560.7 M500.8,524.5C500.2,528.0 495.7,539.7 497.0,545.4C498.3,551.1 505.9,555.0 508.4,558.8C510.9,562.6 511.6,566.7 512.2,568.3 M481.7,518.7C479.2,521.9 472.2,530.8 466.5,537.8C460.8,544.8 455.3,553.1 447.4,560.7C439.4,568.3 424.5,576.5 418.8,583.5C413.1,590.5 413.1,595.6 413.1,602.6C413.1,609.6 418.5,615.9 418.8,625.5C419.1,635.1 415.6,654.2 415.0,660.0 M413.1,602.6C418.8,602.9 439.1,605.5 447.4,604.5C455.7,603.5 457.0,595.0 462.7,596.9C468.4,598.8 479.2,609.2 481.7,615.9C484.2,622.6 476.6,630.9 477.9,636.9C479.2,642.9 487.4,649.6 489.3,652.1 M550.3,528.3C549.0,535.0 544.9,555.3 542.7,568.3C540.5,581.3 536.4,599.4 537.0,606.4C537.6,613.4 544.9,609.6 546.5,610.2 M573.2,564.5C573.8,567.0 574.1,575.9 577.0,579.7C579.9,583.5 587.9,582.8 590.4,587.3C592.9,591.8 592.0,603.2 592.3,606.4 M618.9,530.2C618.3,533.4 614.5,543.5 615.1,549.2C615.8,554.9 620.6,559.4 622.8,564.5C625.0,569.6 627.5,577.2 628.5,579.7 M613.2,606.4C614.8,608.3 618.0,613.7 622.8,617.8C627.6,621.9 640.5,628.0 641.8,631.2C643.1,634.4 635.8,636.6 630.4,636.9C625.0,637.2 613.5,632.5 609.4,633.1C605.3,633.7 606.2,639.4 605.6,640.7 M649.4,514.9C653.9,514.6 671.0,511.1 676.1,513.0C681.2,514.9 681.2,521.3 679.9,526.4C678.6,531.5 670.4,540.6 668.5,543.5 M418.8,625.5C424.2,627.1 440.7,632.5 451.2,635.0C461.7,637.5 476.0,636.5 481.7,640.7C487.4,644.9 484.9,656.8 485.5,660.0 M731.0,495.9C733.5,494.3 740.5,486.0 746.2,486.3C751.9,486.6 761.5,492.7 765.3,497.8C769.1,502.9 771.6,510.4 769.1,516.8C766.6,523.1 752.6,530.5 750.1,535.9C747.6,541.3 750.7,546.7 753.9,549.2C757.1,551.7 766.6,550.8 769.1,551.1 M765.3,497.8C769.1,497.5 781.5,497.2 788.2,495.9C794.9,494.6 802.4,491.1 805.3,490.2 M801.5,547.3C805.6,546.3 819.0,540.6 826.3,541.6C833.6,542.6 840.2,550.5 845.3,553.0C850.4,555.5 852.7,556.6 856.8,556.9C860.9,557.2 867.9,555.2 870.1,554.9 M769.1,516.8C773.2,515.8 785.3,513.0 793.9,511.1C802.5,509.2 816.1,506.3 820.6,505.4 M896.8,473.0C897.1,474.9 896.5,479.3 898.7,484.4C900.9,489.5 907.2,497.1 910.1,503.5C913.0,509.9 915.2,516.6 915.9,522.6C916.5,528.6 913.0,535.3 914.0,539.7C915.0,544.1 917.2,547.3 921.6,549.2C926.0,551.1 936.2,551.1 940.6,551.1C945.0,551.1 947.0,549.5 948.3,549.2 M948.3,549.2C949.6,544.8 952.1,528.0 955.9,522.6C959.7,517.2 966.3,514.9 971.1,516.8C975.9,518.7 980.0,532.4 984.5,534.0C989.0,535.6 991.8,529.9 997.8,526.4C1003.8,522.9 1016.9,515.2 1020.7,513.0 M940.6,551.1C941.6,553.3 946.4,559.7 946.4,564.5C946.4,569.3 942.2,573.4 940.6,579.7C939.0,586.1 938.1,595.6 936.8,602.6C935.5,609.6 935.9,616.6 933.0,621.7C930.1,626.8 921.9,631.2 919.7,633.1 M946.4,564.5C950.2,564.5 965.1,562.0 969.2,564.5C973.3,567.0 971.1,574.6 971.1,579.7C971.1,584.8 968.2,592.1 969.2,595.0C970.2,597.9 975.5,596.6 976.8,596.9 M910.1,556.9C910.8,560.7 914.0,572.1 914.0,579.7C914.0,587.3 910.4,595.0 910.1,602.6C909.8,610.2 913.9,620.4 912.0,625.5C910.1,630.6 900.9,631.8 898.7,633.1 M997.8,526.4C997.2,530.2 993.4,541.0 994.0,549.2C994.6,557.5 1000.3,571.5 1001.6,575.9 M984.5,604.5C988.0,606.7 1000.0,613.3 1005.4,617.8C1010.8,622.2 1013.1,626.8 1016.9,631.2C1020.7,635.7 1023.9,641.0 1028.3,644.5C1032.7,648.0 1037.8,649.5 1043.5,652.1C1049.2,654.7 1059.4,658.7 1062.6,660.0 M952.1,652.1C955.9,649.6 966.0,641.3 974.9,636.9C983.8,632.5 1000.3,627.4 1005.4,625.5 M837.7,497.8C840.2,499.7 849.5,505.4 853.0,509.2C856.5,513.0 857.8,518.7 858.7,520.6 M828.2,617.8C831.1,617.5 840.5,616.5 845.3,615.9C850.1,615.3 854.9,614.3 856.8,614.0 M750.1,595.0C753.3,594.0 763.7,589.0 769.1,589.3C774.5,589.6 780.3,595.6 782.5,596.9 M19.0,717.2C22.2,715.6 32.7,713.3 38.1,707.6C43.5,701.9 47.3,688.3 51.4,682.9C55.5,677.5 55.5,675.5 62.8,675.2C70.1,674.9 86.0,680.7 95.2,681.0C104.4,681.3 110.5,675.9 118.1,677.2C125.7,678.5 137.2,686.7 141.0,688.6 M95.2,681.0C96.8,685.4 102.2,700.6 104.8,707.6C107.3,714.6 109.5,720.4 110.5,722.9 M19.0,782.0C23.4,780.7 36.2,776.2 45.7,774.3C55.2,772.4 67.3,774.3 76.2,770.5C85.1,766.7 92.0,758.8 99.0,751.5C106.0,744.2 114.9,730.8 118.1,726.7 M76.2,770.5C78.7,772.4 88.2,776.3 91.4,782.0C94.6,787.7 94.6,801.0 95.2,804.8 M184.8,686.7C185.8,689.6 185.1,701.9 190.5,703.8C195.9,705.7 210.8,697.8 217.2,698.1C223.5,698.4 225.1,701.9 228.6,705.7C232.1,709.5 236.6,718.5 238.2,721.0 M163.8,751.5C166.4,755.0 176.9,766.0 179.1,772.4C181.3,778.8 177.8,784.8 177.2,789.6C176.6,794.4 169.9,799.4 175.3,801.0C180.7,802.6 198.8,798.5 209.6,799.1C220.4,799.7 235.0,803.8 240.1,804.8 M242.0,766.7C241.7,773.1 240.7,791.4 240.1,804.8C239.5,818.2 238.5,840.0 238.2,847.0 M264.8,732.4C266.4,734.6 270.3,741.3 274.4,745.8C278.5,750.2 287.1,753.7 289.6,759.1C292.1,764.5 287.1,773.4 289.6,778.2C292.2,783.0 299.2,785.5 304.9,787.7C310.6,789.9 320.7,790.9 323.9,791.5 M289.6,778.2 L282.0,785.8 M304.9,787.7C304.3,790.6 300.5,798.8 301.1,804.8C301.7,810.8 306.2,816.9 308.7,823.9C311.2,830.9 315.0,843.1 316.3,847.0 M323.9,791.5C325.8,790.2 332.2,782.3 335.4,783.9C338.6,785.5 340.5,796.2 343.0,801.0C345.5,805.8 349.3,810.6 350.6,812.5 M350.6,749.6C351.9,748.3 355.3,742.9 358.2,741.9C361.1,740.9 365.0,741.7 367.8,743.9C370.6,746.1 373.8,753.4 375.0,755.3 M110.5,808.7 L114.3,831.5 M19.0,740.0 L26.6,751.5 M537.9,660.0 L540.8,688.6 M541.8,660.0 L543.7,688.6 M422.6,660.0C421.0,662.5 413.7,668.9 413.1,675.2C412.5,681.6 416.9,690.2 418.8,698.1C420.7,706.0 424.0,715.3 424.6,722.9C425.2,730.5 422.6,736.6 422.6,743.9C422.6,751.2 424.9,760.4 424.6,766.7C424.3,773.1 422.6,774.4 420.7,782.0C418.8,789.6 417.5,801.7 413.1,812.5C408.7,823.3 397.3,841.2 394.1,847.0 M422.6,743.9C426.7,744.9 442.0,745.8 447.4,749.6C452.8,753.4 453.1,759.4 455.0,766.7C456.9,774.0 460.2,785.1 458.9,793.4C457.6,801.7 450.3,808.0 447.4,816.3C444.5,824.6 442.6,838.5 441.7,843.0 M476.0,692.4C478.9,691.8 487.2,688.3 493.2,688.6C499.2,688.9 504.6,693.7 512.2,694.3C519.8,694.9 531.3,694.9 538.9,692.4C546.5,689.9 554.8,681.3 558.0,679.1 M375.0,822.0C378.2,822.6 386.8,825.8 394.1,825.8C401.4,825.8 411.2,821.0 418.8,822.0C426.4,823.0 436.3,829.9 439.8,831.5 M474.1,722.9C477.9,722.6 489.4,722.6 497.0,721.0C504.6,719.4 516.0,714.7 519.8,713.4 M875.8,660.0C877.1,661.9 881.9,666.6 883.5,671.4C885.1,676.2 876.2,682.9 885.4,688.6C894.6,694.3 929.5,697.8 938.7,705.7C947.9,713.6 940.3,726.0 940.6,736.2C940.9,746.4 940.6,761.6 940.6,766.7 M974.9,690.5C976.2,688.0 976.2,679.3 982.6,675.2C989.0,671.1 1006.8,668.2 1013.1,665.7C1019.5,663.2 1019.4,661.0 1020.7,660.0 M914.0,759.1C912.1,762.3 907.0,773.8 902.5,778.2C898.0,782.7 893.0,781.4 887.3,785.8C881.6,790.2 871.4,801.6 868.2,804.8 M1064.5,703.8C1062.9,708.6 1059.1,723.2 1055.0,732.4C1050.9,741.6 1044.8,748.9 1039.7,759.1C1034.6,769.3 1027.3,785.8 1024.5,793.4C1021.6,801.0 1025.8,802.2 1022.6,804.8C1019.4,807.3 1008.3,808.1 1005.4,808.7 M795.8,660.0C796.1,662.5 796.8,675.2 797.7,675.2C798.7,675.2 800.9,662.5 801.5,660.0 M1064.5,660.0C1067.0,663.2 1076.0,673.4 1079.8,679.1C1083.5,684.8 1085.8,691.8 1087.0,694.3 M1064.5,717.2C1066.1,719.7 1070.2,729.2 1074.0,732.4C1077.8,735.6 1084.8,735.6 1087.0,736.2 M801.5,770.5C802.5,769.2 805.0,763.9 807.2,762.9C809.4,761.9 813.6,764.5 814.9,764.8 M102.9,854.6C106.7,858.4 119.4,871.8 125.7,877.5C132.1,883.2 134.7,885.4 141.0,888.9C147.3,892.4 155.6,894.7 163.8,898.5C172.1,902.3 184.1,906.4 190.5,911.8C196.9,917.2 198.2,925.8 202.0,930.9C205.8,936.0 209.3,939.9 213.4,942.3C217.5,944.7 221.9,944.8 226.7,945.1C231.5,945.4 237.9,949.4 242.0,944.2C246.1,939.0 251.5,923.6 251.5,913.7C251.5,903.9 243.9,896.2 242.0,885.1C240.1,874.0 240.4,853.4 240.1,847.0 M141.0,888.9C144.8,887.3 155.6,882.2 163.8,879.4C172.1,876.5 181.0,871.8 190.5,871.8C200.0,871.8 214.0,879.7 221.0,879.4C228.0,879.1 230.5,871.5 232.4,869.9 M238.2,991.8C232.2,992.1 210.6,992.7 202.0,993.7C193.4,994.7 191.8,993.5 186.7,997.6C181.6,1001.7 176.6,1012.3 171.5,1018.5C166.4,1024.7 158.8,1032.2 156.2,1034.9 M238.2,991.8C243.0,989.9 257.6,983.9 266.8,980.4C276.0,976.9 287.0,971.8 293.4,970.9C299.8,970.0 303.0,977.6 304.9,974.7C306.8,971.8 302.0,959.7 304.9,953.7C307.8,947.7 314.4,943.6 322.0,938.5C329.6,933.4 345.8,925.8 350.6,923.2 M242.0,944.2C241.4,948.3 239.5,963.0 238.2,969.0C236.9,975.0 234.4,976.6 234.4,980.4C234.4,984.2 236.9,986.1 238.2,991.8C239.5,997.5 239.8,1007.5 242.0,1014.7C244.2,1021.9 249.9,1031.5 251.5,1034.9 M226.7,945.1C227.0,942.1 227.0,933.8 228.6,927.0C230.2,920.2 235.3,910.2 236.3,904.2C237.3,898.2 234.7,893.0 234.4,890.8 M141.0,888.9C137.2,890.2 124.4,891.5 118.1,896.6C111.8,901.7 108.6,915.3 102.9,919.4C97.2,923.5 90.8,921.9 83.8,921.3C76.8,920.7 64.7,916.5 60.9,915.6 M68.6,953.7C73.0,952.4 88.2,944.8 95.2,946.1C102.2,947.4 105.4,954.3 110.5,961.3C115.6,968.3 121.9,979.7 125.7,988.0C129.5,996.3 128.9,1005.8 133.3,1010.9C137.8,1016.0 146.0,1017.2 152.4,1018.5C158.8,1019.8 168.3,1018.5 171.5,1018.5 M19.0,976.6C20.3,978.5 21.2,985.8 26.6,988.0C32.0,990.2 43.1,990.5 51.4,989.9C59.7,989.3 72.7,989.3 76.2,984.2C79.7,979.1 73.0,963.5 72.4,959.4 M51.4,989.9C52.0,992.8 56.2,999.6 55.2,1007.1C54.2,1014.6 47.3,1030.3 45.7,1034.9 M125.7,988.0C130.2,986.1 143.8,979.5 152.4,976.6C161.0,973.8 171.8,968.0 177.2,970.9C182.6,973.8 183.5,989.9 184.8,993.7 M259.1,991.8C260.1,995.6 263.5,1007.5 264.8,1014.7C266.1,1021.9 266.5,1031.5 266.8,1034.9 M304.9,974.7C305.8,978.2 311.2,988.4 310.6,995.7C310.0,1003.0 305.2,1012.0 301.1,1018.5C297.0,1025.0 288.4,1032.2 285.8,1034.9 M202.0,995.7C201.3,998.9 196.8,1010.9 198.1,1014.7C199.4,1018.5 205.8,1015.1 209.6,1018.5C213.4,1021.9 219.1,1032.2 221.0,1034.9 M289.6,864.2C292.8,865.8 303.9,873.7 308.7,873.7C313.5,873.7 316.6,865.8 318.2,864.2 M386.4,869.9C389.3,868.6 398.8,861.9 403.6,862.2C408.4,862.5 409.6,869.6 415.0,871.8C420.4,874.0 431.9,872.8 436.0,875.6C440.1,878.5 436.0,885.1 439.8,888.9C443.6,892.7 453.8,897.2 458.9,898.5C464.0,899.8 467.1,898.8 470.3,896.6C473.5,894.4 476.6,887.0 477.9,885.1 M477.9,885.1C479.8,886.7 482.9,892.7 489.3,894.6C495.7,896.5 508.7,894.4 516.0,896.6C523.3,898.8 532.6,903.6 533.2,908.0C533.8,912.4 517.6,920.0 519.8,923.2C522.0,926.4 540.8,925.4 546.5,927.0C552.2,928.6 552.8,931.8 554.1,932.8 M519.8,923.2C518.8,925.8 514.4,932.1 514.1,938.5C513.8,944.9 513.8,956.5 517.9,961.3C522.0,966.1 533.8,964.5 538.9,967.1C544.0,969.7 546.8,975.0 548.4,976.6 M517.9,961.3C519.5,963.8 527.2,970.2 527.5,976.6C527.8,983.0 523.0,993.1 519.8,999.5C516.6,1005.9 509.7,1008.8 508.4,1014.7C507.1,1020.6 511.6,1031.5 512.2,1034.9 M586.5,847.0C587.1,851.8 589.1,867.7 590.4,875.6C591.7,883.5 593.6,891.4 594.2,894.6 M618.9,847.0C617.6,851.8 615.1,868.0 611.3,875.6C607.5,883.2 598.6,889.9 596.1,892.7 M596.1,908.0C600.5,907.7 615.2,905.1 622.8,906.1C630.4,907.1 637.4,909.6 641.8,913.7C646.2,917.8 644.3,925.5 649.4,930.9C654.5,936.3 667.2,941.0 672.3,946.1C677.4,951.2 678.6,958.8 679.9,961.3 M584.6,949.9C589.0,951.8 604.3,958.1 611.3,961.3C618.3,964.5 624.0,967.7 626.6,969.0 M638.0,885.1C640.5,887.0 649.4,891.8 653.2,896.6C657.0,901.4 661.5,908.0 660.9,913.7C660.3,919.4 651.3,928.0 649.4,930.9 M672.3,858.4C674.2,862.9 683.1,876.8 683.7,885.1C684.3,893.4 676.1,901.0 676.1,908.0C676.1,915.0 679.2,921.9 683.7,927.0C688.2,932.1 699.6,936.6 702.8,938.5 M569.4,999.5C570.7,1002.7 575.7,1012.6 577.0,1018.5C578.3,1024.4 577.0,1032.2 577.0,1034.9 M538.9,1018.5C543.4,1017.9 556.4,1014.7 565.6,1014.7C574.8,1014.7 583.4,1016.6 594.2,1018.5C605.0,1020.4 619.9,1023.4 630.4,1026.1C640.9,1028.8 652.6,1033.4 657.1,1034.9 M413.1,999.5C416.3,997.3 428.1,986.1 432.2,986.1C436.3,986.1 438.5,994.1 437.9,999.5C437.3,1004.9 429.3,1012.6 428.4,1018.5C427.4,1024.4 431.6,1032.2 432.2,1034.9 M474.1,984.2C473.5,987.4 472.2,997.6 470.3,1003.3C468.4,1009.0 464.0,1016.0 462.7,1018.5 M921.6,852.7C922.9,854.6 924.8,860.7 929.2,864.2C933.7,867.7 942.3,869.9 948.3,873.7C954.3,877.5 962.5,884.8 965.4,887.0 M974.9,930.9C975.9,933.4 976.9,937.9 980.7,946.1C984.5,954.4 994.9,974.7 997.8,980.4 M1087.0,909.9C1082.3,912.1 1065.4,917.8 1058.8,923.2C1052.2,928.6 1051.2,937.2 1047.4,942.3C1043.6,947.4 1034.6,949.2 1035.9,953.7C1037.2,958.2 1051.2,962.6 1055.0,969.0C1058.8,975.4 1058.2,988.0 1058.8,991.8 M807.2,940.4C804.0,942.0 794.6,945.8 788.2,949.9C781.9,954.0 773.6,959.5 769.1,965.2C764.6,970.9 762.1,978.5 761.5,984.2C760.9,989.9 764.7,997.0 765.3,999.5 M822.5,1034.9C823.8,1032.2 826.3,1018.5 830.1,1018.5C833.9,1018.5 842.8,1032.2 845.3,1034.9 M948.3,1014.7C951.5,1014.1 961.3,1013.1 967.3,1010.9C973.3,1008.7 981.6,1003.0 984.5,1001.4 M731.0,852.7C732.9,854.6 739.2,859.1 742.4,864.2C745.6,869.3 748.8,880.0 750.1,883.2"/>
<path fill="none" stroke="#777" stroke-width="1" d="M19.0,560.7C20.9,559.5 24.0,555.6 30.4,553.4C36.8,551.2 46.3,549.3 57.1,547.7C67.9,546.1 83.8,545.5 95.2,543.9C106.6,542.3 116.2,540.4 125.7,538.2C135.2,536.0 146.7,533.5 152.4,530.6C158.1,527.7 156.2,523.7 160.0,521.0C163.8,518.3 168.3,515.3 175.3,514.2C182.3,513.1 193.1,516.2 202.0,514.2C210.9,512.2 220.0,505.3 228.6,502.0C237.2,498.7 248.0,497.2 253.4,494.3C258.8,491.4 259.7,487.9 261.0,484.4C262.3,480.8 261.0,474.9 261.0,473.0"/>
<path fill="none" stroke="#f8c582" stroke-width="1.9" stroke-linecap="round" stroke-linejoin="round" d="M19.0,494.3C22.2,493.4 28.6,489.2 38.1,488.6C47.6,488.0 66.0,491.1 76.2,490.5C86.4,489.9 92.7,487.3 99.0,484.8C105.3,482.3 109.8,477.3 114.3,475.3C118.8,473.3 123.8,473.4 125.7,473.0 M121.9,473.0 L133.3,474.5 M125.7,539.7 L152.4,536.3 M248.6,562.6C246.9,566.1 241.5,576.2 238.2,583.5C234.9,590.8 231.1,599.4 228.6,606.4C226.1,613.4 224.5,619.8 222.9,625.5C221.3,631.2 219.7,638.2 219.1,640.7 M322.4,549.2C323.9,551.4 329.6,558.8 331.5,562.6C333.4,566.4 330.3,570.8 333.8,572.1C337.3,573.4 347.8,572.2 352.5,570.6C357.2,569.0 358.2,564.9 362.0,562.6C365.8,560.3 372.8,557.9 375.0,556.9 M276.3,484.4C278.5,483.8 285.2,481.6 289.6,480.6C294.1,479.7 298.6,476.1 303.0,478.7C307.4,481.2 313.4,490.5 316.3,495.9C319.2,501.3 320.1,506.0 320.1,511.1C320.1,516.2 316.0,521.6 316.3,526.4C316.6,531.2 321.1,537.5 322.0,539.7 M289.6,486.3C291.2,486.9 297.5,488.6 299.1,490.2C300.7,491.8 301.3,494.8 299.1,495.9C296.9,497.0 288.0,496.6 285.8,496.8 M264.8,509.2C266.1,510.8 272.2,515.2 272.5,518.7C272.8,522.2 266.5,527.0 266.8,530.2C267.1,533.4 273.4,534.9 274.4,537.8C275.3,540.6 275.4,544.8 272.5,547.3C269.6,549.8 259.8,552.0 257.2,553.0 M375.0,554.9C376.9,555.2 382.6,558.5 386.4,556.9C390.2,555.3 394.1,547.6 397.9,545.4C401.7,543.2 405.8,542.9 409.3,543.5C412.8,544.1 414.0,545.7 418.8,549.2C423.6,552.7 435.7,560.4 437.9,564.5C440.1,568.6 431.6,572.1 432.2,574.0C432.8,575.9 437.6,576.2 441.7,575.9C445.8,575.6 453.1,571.8 456.9,572.1C460.7,572.4 461.1,575.9 464.6,577.8C468.1,579.7 473.1,583.2 477.9,583.5C482.7,583.8 488.1,581.6 493.2,579.7C498.3,577.8 505.2,574.0 508.4,572.1C511.6,570.2 509.7,571.2 512.2,568.3C514.8,565.4 518.9,560.0 523.7,554.9C528.5,549.8 536.4,543.2 540.8,537.8C545.2,532.4 547.4,527.4 550.3,522.6C553.2,517.8 555.5,513.6 558.0,509.2C560.5,504.8 562.4,500.7 565.6,495.9C568.8,491.1 574.1,484.4 577.0,480.6C579.9,476.8 581.8,474.3 582.7,473.0 M512.2,568.3C512.8,571.5 514.7,580.9 516.0,587.3C517.3,593.6 518.5,600.7 519.8,606.4C521.1,612.1 521.8,617.6 523.7,621.7C525.6,625.8 529.1,627.4 531.3,631.2C533.5,635.0 535.7,639.7 537.0,644.5C538.3,649.3 538.6,657.4 538.9,660.0 M542.7,514.0C544.0,514.8 547.1,517.0 550.3,518.7C553.5,520.5 556.7,524.8 561.8,524.5C566.9,524.2 576.0,518.5 580.8,516.8C585.6,515.0 587.8,513.0 590.4,514.0C593.0,515.0 593.9,519.3 596.1,522.6C598.3,525.9 600.5,533.4 603.7,534.0C606.9,534.6 611.9,528.6 615.1,526.4C618.3,524.2 620.2,520.6 622.8,520.6C625.3,520.6 628.5,524.2 630.4,526.4C632.3,528.6 631.0,533.4 634.2,534.0C637.4,534.6 645.6,529.9 649.4,530.2C653.2,530.5 654.5,533.7 657.1,535.9C659.7,538.1 660.9,540.6 664.7,543.5C668.5,546.4 675.5,549.8 679.9,553.0C684.3,556.2 686.9,559.7 691.4,562.6C695.9,565.5 701.5,568.6 706.6,570.2C711.7,571.8 717.8,570.5 721.9,572.1C726.0,573.7 729.5,578.4 731.0,579.7 M495.1,473.0C497.3,474.3 504.9,477.7 508.4,480.6C511.9,483.5 514.7,488.6 516.0,490.2 M582.7,473.0 L594.2,474.9 M599.9,660.0C601.8,658.7 609.1,655.0 611.3,652.1C613.5,649.2 610.3,643.9 613.2,642.6C616.1,641.3 623.7,642.9 628.5,644.5C633.3,646.1 637.4,650.5 641.8,652.1C646.2,653.7 650.6,655.0 655.1,654.0C659.6,653.0 664.4,647.0 668.5,646.4C672.6,645.8 676.4,651.2 679.9,650.2C683.4,649.2 685.7,643.6 689.5,640.7C693.3,637.9 699.9,636.3 702.8,633.1C705.6,629.9 703.4,625.5 706.6,621.7C709.8,617.9 718.4,614.3 721.9,610.2C725.4,606.1 726.1,599.4 727.6,596.9C729.1,594.4 730.4,595.3 731.0,595.0 M706.6,633.1C707.2,635.0 708.2,642.0 710.4,644.5C712.6,647.0 717.3,645.7 719.9,648.3C722.5,650.9 724.7,658.0 725.7,660.0 M512.2,660.0 L538.9,658.8 M814.9,473.0C816.2,474.6 822.8,480.3 822.5,482.5C822.2,484.7 814.2,482.5 812.9,486.3C811.6,490.1 813.0,501.3 814.9,505.4C816.8,509.5 823.1,508.6 824.4,511.1C825.7,513.6 824.1,517.7 822.5,520.6C820.9,523.5 817.4,525.4 814.9,528.3C812.4,531.2 809.4,534.6 807.2,537.8C805.0,541.0 802.8,544.3 801.5,547.3C800.2,550.3 802.8,554.3 799.6,555.9C796.4,557.5 787.6,557.4 782.5,556.9C777.4,556.4 772.9,551.1 769.1,553.0C765.3,554.9 762.8,563.5 759.6,568.3C756.4,573.1 753.3,577.5 750.1,581.6C746.9,585.7 742.7,589.3 740.5,593.1C738.3,596.9 737.3,602.6 736.7,604.5 M19.0,766.7C20.9,764.8 26.3,758.1 30.4,755.3C34.5,752.4 38.4,751.8 43.8,749.6C49.2,747.4 55.8,744.8 62.8,741.9C69.8,739.0 77.8,735.6 85.7,732.4C93.7,729.2 103.8,726.4 110.5,722.9C117.2,719.4 120.0,714.7 125.7,711.5C131.4,708.3 138.5,706.0 144.8,703.8C151.2,701.6 159.4,698.6 163.8,698.1C168.2,697.6 168.0,699.4 171.5,701.0C175.0,702.6 180.4,705.2 184.8,707.6C189.2,710.0 194.0,712.4 198.1,715.3C202.2,718.2 205.8,721.3 209.6,724.8C213.4,728.3 216.9,732.7 221.0,736.2C225.1,739.7 230.0,742.3 234.4,745.8C238.8,749.3 244.2,752.8 247.7,757.2C251.2,761.6 252.1,768.6 255.3,772.4C258.5,776.2 262.4,777.5 266.8,780.1C271.2,782.7 277.6,784.2 282.0,787.7C286.4,791.2 290.5,796.2 293.4,801.0C296.2,805.8 297.5,810.6 299.1,816.3C300.7,822.0 300.8,830.5 303.0,835.3C305.2,840.1 309.0,842.9 312.5,844.9C316.0,846.9 322.0,846.6 323.9,847.0 M209.6,724.8C210.9,724.2 213.1,721.3 217.2,721.0C221.3,720.7 229.3,721.9 234.4,722.9C239.5,723.9 242.3,725.4 247.7,726.7C253.1,728.0 260.8,731.8 266.8,730.5C272.8,729.2 280.1,721.8 283.9,719.1C287.7,716.4 286.4,714.6 289.6,714.3C292.8,714.0 299.2,717.7 303.0,717.2C306.8,716.7 310.3,711.5 312.5,711.5C314.7,711.5 314.7,713.7 316.3,717.2C317.9,720.7 319.5,728.6 322.0,732.4C324.5,736.2 328.0,738.1 331.5,740.0C335.0,741.9 340.4,741.4 343.0,743.9C345.6,746.4 343.9,753.7 346.8,755.3C349.7,756.9 356.9,755.0 360.1,753.4C363.3,751.8 363.4,747.1 365.9,745.8C368.4,744.5 373.5,745.8 375.0,745.8 M19.0,808.7C20.9,809.2 26.3,809.9 30.4,811.5C34.5,813.1 40.0,815.8 43.8,818.2C47.6,820.6 49.5,823.3 53.3,825.8C57.1,828.3 62.5,830.9 66.6,833.4C70.7,835.9 76.2,839.7 78.1,841.0 M504.6,660.0C502.7,661.3 497.0,664.1 493.2,667.6C489.4,671.1 484.6,676.9 481.7,681.0C478.8,685.1 478.9,689.2 476.0,692.4C473.1,695.6 468.7,696.8 464.6,700.0C460.5,703.2 454.7,707.7 451.2,711.5C447.7,715.3 445.2,719.1 443.6,722.9C442.0,726.7 444.2,730.8 441.7,734.3C439.2,737.8 432.2,742.6 428.4,743.9C424.6,745.2 422.0,743.5 418.8,741.9C415.6,740.3 412.8,735.2 409.3,734.3C405.8,733.3 401.7,735.2 397.9,736.2C394.1,737.2 389.3,740.0 386.4,740.0C383.5,740.0 382.6,734.9 380.7,736.2C378.8,737.5 375.9,745.8 375.0,747.7 M504.6,660.0C510.0,660.0 528.8,659.4 537.0,660.0C545.2,660.6 549.3,662.2 554.1,663.8C558.9,665.4 561.8,667.8 565.6,669.5C569.4,671.2 573.2,674.3 577.0,674.3C580.8,674.3 585.5,671.2 588.4,669.5C591.3,667.8 592.3,665.5 594.2,663.8C596.1,662.0 599.0,659.8 599.9,659.0 M725.7,659.0C725.4,660.4 722.9,664.9 723.8,667.6C724.7,670.3 729.8,673.9 731.0,675.2 M731.0,678.1C732.6,679.2 737.3,681.5 740.5,684.8C743.7,688.1 746.9,694.0 750.1,698.1C753.3,702.2 757.7,706.1 759.6,709.6C761.5,713.1 762.5,717.2 761.5,719.1C760.5,721.0 755.2,719.7 753.9,721.0C752.6,722.3 751.4,724.8 753.9,726.7C756.4,728.6 764.0,730.2 769.1,732.4C774.2,734.6 780.0,737.1 784.4,740.0C788.8,742.9 794.1,747.1 795.8,749.6C797.5,752.1 795.4,752.4 794.8,755.3C794.2,758.1 791.2,763.5 792.0,766.7C792.8,769.9 797.4,771.4 799.6,774.3C801.8,777.2 805.3,781.0 805.3,783.9C805.3,786.8 801.2,788.6 799.6,791.5C798.0,794.4 796.1,797.5 795.8,801.0C795.5,804.5 798.3,808.7 797.7,812.5C797.1,816.3 793.3,820.7 792.0,823.9C790.7,827.1 789.8,828.6 790.1,831.5C790.4,834.4 794.5,838.4 793.9,841.0C793.3,843.6 787.6,846.0 786.3,847.0 M795.8,749.6C797.4,748.6 801.5,745.6 805.3,743.9C809.1,742.1 815.8,742.9 818.7,739.1C821.6,735.3 820.0,725.6 822.5,721.0C825.0,716.4 829.4,715.3 833.9,711.5C838.4,707.7 844.1,701.0 849.2,698.1C854.3,695.2 859.3,694.9 864.4,694.3C869.5,693.7 875.6,693.3 879.7,694.3C883.8,695.2 885.7,698.4 889.2,700.0C892.7,701.6 897.8,701.2 900.6,703.8C903.5,706.3 903.8,713.4 906.3,715.3C908.8,717.2 913.7,716.4 915.9,715.3C918.1,714.2 918.6,708.6 919.7,708.6C920.8,708.6 923.1,711.6 922.5,715.3C921.9,718.9 917.3,726.1 915.9,730.5C914.5,734.9 912.7,738.4 914.0,741.9C915.3,745.4 920.0,748.6 923.5,751.5C927.0,754.4 932.4,755.6 934.9,759.1C937.4,762.6 937.4,770.5 938.7,772.4C940.0,774.3 941.4,769.5 942.5,770.5C943.6,771.5 945.4,775.0 945.4,778.2C945.4,781.4 942.3,785.8 942.5,789.6C942.7,793.4 943.9,798.8 946.4,801.0C948.9,803.2 955.6,800.7 957.8,802.9C960.0,805.1 957.5,812.2 959.7,814.4C961.9,816.6 967.9,815.7 971.1,816.3C974.3,816.9 977.5,817.9 978.8,818.2 M978.8,818.2C981.0,820.1 987.7,827.1 992.1,829.6C996.5,832.1 1001.9,833.4 1005.4,833.4C1008.9,833.4 1009.3,830.5 1013.1,829.6C1016.9,828.7 1023.2,829.0 1028.3,827.7C1033.4,826.4 1038.4,823.0 1043.5,822.0C1048.6,821.0 1053.7,822.6 1058.8,822.0C1063.9,821.4 1069.3,819.8 1074.0,818.2C1078.7,816.6 1084.8,813.5 1087.0,812.5 M961.6,827.7 L959.7,847.0 M944.4,844.9 L959.7,847.0 M323.5,845.5C324.2,846.7 325.1,850.2 327.7,852.7C330.3,855.2 334.8,858.2 339.2,860.3C343.6,862.4 351.2,862.9 354.4,865.1C357.6,867.3 357.2,868.8 358.2,873.7C359.1,878.6 361.1,888.6 360.1,894.6C359.2,900.6 354.1,905.1 352.5,909.9C350.9,914.7 350.0,918.4 350.6,923.2C351.2,928.0 354.4,933.4 356.3,938.5C358.2,943.6 360.1,948.0 362.0,953.7C363.9,959.4 367.5,966.4 367.8,972.8C368.1,979.1 365.2,986.4 363.9,991.8C362.6,997.2 361.7,1000.8 360.1,1005.2C358.5,1009.7 355.7,1013.5 354.4,1018.5C353.1,1023.5 352.8,1032.2 352.5,1034.9 M66.6,833.7 L78.1,840.3 M594.2,894.6C594.5,896.8 595.2,903.5 596.1,908.0C597.0,912.5 600.2,917.5 599.9,921.3C599.6,925.1 597.1,927.4 594.2,930.9C591.3,934.4 585.6,938.5 582.7,942.3C579.8,946.1 578.0,949.2 577.0,953.7C576.0,958.2 578.3,964.9 577.0,969.0C575.7,973.1 572.6,975.0 569.4,978.5C566.2,982.0 561.8,986.1 558.0,989.9C554.2,993.7 549.7,997.3 546.5,1001.4C543.3,1005.5 540.5,1009.9 538.9,1014.7C537.3,1019.5 537.3,1027.5 537.0,1030.0 M731.0,900.4C730.4,904.2 728.5,916.9 727.6,923.2C726.7,929.6 725.1,934.0 725.7,938.5C726.3,943.0 730.1,948.0 731.0,949.9 M731.0,949.9C728.2,949.0 719.9,944.8 714.2,944.2C708.6,943.6 700.9,943.9 697.1,946.1C693.3,948.3 694.0,952.1 691.4,957.5C688.8,962.9 683.1,972.8 681.8,978.5C680.5,984.2 682.1,987.3 683.7,991.8C685.3,996.2 689.8,1000.8 691.4,1005.2C693.0,1009.7 693.6,1013.4 693.3,1018.5C693.0,1023.6 690.1,1032.8 689.5,1035.7 M784.4,847.0C781.9,849.5 774.8,855.9 769.1,862.2C763.4,868.6 756.5,879.4 750.1,885.1C743.8,890.8 734.2,894.7 731.0,896.6 M750.1,885.1C751.7,887.0 756.4,891.5 759.6,896.6C762.8,901.7 764.7,910.2 769.1,915.6C773.5,921.0 779.9,925.4 786.3,928.9C792.6,932.4 800.5,935.6 807.2,936.6C813.9,937.6 821.2,936.3 826.3,934.7C831.4,933.1 834.2,930.8 837.7,927.0C841.2,923.2 843.5,915.8 847.3,911.8C851.1,907.8 855.2,904.8 860.6,903.2C866.0,901.6 873.7,903.1 879.7,902.3C885.7,901.5 891.1,900.1 896.8,898.5C902.5,896.9 909.2,894.6 914.0,892.7C918.8,890.8 921.0,888.6 925.4,887.0C929.8,885.4 936.5,884.8 940.6,883.2C944.7,881.6 948.3,880.4 950.2,877.5C952.1,874.6 952.4,869.9 952.1,866.1C951.8,862.3 948.6,857.8 948.3,854.6C948.0,851.4 949.9,848.3 950.2,847.0 M925.4,887.0C927.3,888.9 933.9,893.7 936.8,898.5C939.6,903.3 940.3,910.2 942.5,915.6C944.7,921.0 948.0,926.5 950.2,930.9C952.4,935.3 953.7,940.7 955.9,942.3C958.1,943.9 961.6,939.8 963.5,940.4C965.4,941.0 968.2,943.9 967.3,946.1C966.3,948.3 959.1,951.5 957.8,953.7C956.5,955.9 956.9,957.8 959.7,959.4C962.6,961.0 970.1,961.4 974.9,963.3C979.7,965.2 984.5,967.4 988.3,970.9C992.1,974.4 996.8,980.1 997.8,984.2C998.8,988.3 994.0,991.9 994.0,995.7C994.0,999.5 995.3,1003.6 997.8,1007.1C1000.3,1010.6 1007.3,1015.0 1009.2,1016.6"/>
<path fill="none" stroke="#fa9377" stroke-width="2.4" stroke-linecap="round" stroke-linejoin="round" d="M265.2,473.0C264.9,474.9 266.1,478.7 263.3,484.4C260.5,490.1 252.2,500.9 248.6,507.3C245.0,513.7 242.5,516.9 242.0,522.6C241.5,528.3 244.1,535.9 245.4,541.6C246.7,547.3 250.1,550.5 249.6,556.9C249.1,563.2 245.2,571.5 242.4,579.7C239.6,588.0 235.7,598.1 232.8,606.4C229.9,614.7 227.7,622.9 225.2,629.3C222.7,635.6 222.0,639.7 217.6,644.5C213.2,649.3 201.7,655.9 198.5,658.2 M263.3,488.2C257.5,490.4 239.1,496.5 228.6,501.6C218.1,506.7 206.6,515.2 200.4,518.7C194.2,522.2 196.3,521.2 191.5,522.9C186.7,524.5 178.0,526.4 171.5,528.6C165.0,530.8 155.6,535.0 152.4,536.3 M264.8,486.7C268.3,485.4 278.2,480.7 285.8,478.7C293.4,476.7 304.3,474.6 310.6,474.9C316.9,475.2 320.8,477.1 323.5,480.6C326.2,484.1 326.8,491.8 326.8,495.9C326.8,500.0 324.1,503.8 323.5,505.4 M273.4,537.8C276.1,537.5 282.5,537.2 289.6,536.3C296.8,535.4 310.8,531.9 316.3,532.5C321.8,533.1 321.8,537.2 322.4,540.1C323.0,543.0 322.4,547.1 320.1,549.6C317.8,552.1 312.8,554.7 308.7,555.3C304.6,555.9 298.5,555.0 295.3,553.4C292.1,551.8 290.6,548.3 289.6,545.8C288.7,543.3 289.6,539.5 289.6,538.2 M249.6,556.9C252.1,556.2 260.4,555.2 264.8,553.0C269.2,550.8 274.9,546.0 276.3,543.5C277.7,541.0 273.9,538.8 273.4,537.8 M198.5,658.3C195.9,660.5 187.4,667.0 182.9,671.4C178.4,675.8 173.7,680.0 171.5,684.8C169.3,689.6 171.5,694.9 169.6,700.0C167.7,705.1 163.2,710.5 160.0,715.3C156.8,720.1 154.0,724.2 150.5,728.6C147.0,733.0 140.7,737.5 139.1,741.9C137.5,746.3 141.6,750.8 141.0,755.3C140.4,759.8 137.5,764.1 135.3,768.6C133.1,773.1 131.4,777.9 127.6,782.0C123.8,786.1 116.9,789.3 112.4,793.4C108.0,797.5 104.4,801.9 100.9,806.7C97.4,811.5 93.9,816.9 91.4,822.0C88.9,827.1 88.6,833.0 85.7,837.2C82.8,841.4 76.2,845.4 74.3,847.0 M75.0,845.5C72.7,848.3 65.2,855.9 60.9,862.2C56.6,868.5 53.3,877.2 49.5,883.2C45.7,889.2 41.9,894.0 38.1,898.5C34.3,903.0 29.8,907.0 26.6,909.9C23.4,912.8 20.3,914.6 19.0,915.6 M489.3,1030.3C492.5,1029.5 502.0,1025.4 508.4,1025.2C514.8,1025.0 521.8,1027.2 527.5,1029.0C533.2,1030.8 540.2,1034.6 542.7,1035.7 M641.8,1030.0 L640.9,1035.7"/>
<path fill="none" stroke="#e8708f" stroke-width="2.8" stroke-linecap="round" stroke-linejoin="round" d="M192.8,473.0C192.8,477.8 193.0,493.3 192.8,501.6C192.6,509.9 192.1,516.9 191.7,522.6C191.3,528.3 191.5,530.8 190.5,535.9C189.5,541.0 187.3,547.0 185.8,553.0C184.3,559.0 182.0,565.7 181.4,572.1C180.8,578.5 182.0,584.9 182.5,591.2C183.0,597.6 184.3,603.9 184.4,610.2C184.5,616.6 183.9,623.6 183.3,629.3C182.7,635.0 181.2,639.4 180.6,644.5C180.0,649.6 179.7,657.4 179.5,660.0 M333.5,559.7C333.8,560.8 333.8,565.5 335.4,566.4C337.0,567.3 340.3,565.2 343.0,564.9C345.7,564.6 350.0,562.0 351.6,564.5C353.2,567.0 353.0,574.6 352.9,579.7C352.8,584.8 352.5,590.5 351.0,595.0C349.5,599.5 345.5,601.9 343.9,606.4C342.2,610.9 341.0,616.6 341.1,621.7C341.2,626.8 343.5,630.5 344.5,636.9C345.5,643.3 346.8,656.1 347.2,660.0 M179.5,658.1C179.1,658.4 179.8,658.7 177.2,660.0C174.6,661.3 168.6,663.2 163.8,665.7C159.0,668.2 153.0,671.4 148.6,675.2C144.2,679.0 140.1,683.2 137.2,688.6C134.3,694.0 133.3,701.9 131.4,707.6C129.5,713.3 127.3,717.5 125.7,722.9C124.1,728.3 122.9,734.6 121.9,740.0C121.0,745.4 121.3,750.2 120.0,755.3C118.7,760.4 117.1,765.4 114.3,770.5C111.5,775.6 106.7,781.3 102.9,785.8C99.1,790.2 95.5,793.7 91.4,797.2C87.3,800.7 81.9,803.2 78.1,806.7C74.3,810.2 71.8,814.1 68.6,818.2C65.4,822.3 62.5,826.7 59.0,831.5C55.5,836.3 49.5,844.4 47.6,847.0 M179.5,658.1C182.0,658.4 190.9,658.4 194.3,660.0C197.7,661.6 197.4,665.4 200.0,667.6C202.6,669.8 206.1,673.0 209.6,673.3C213.1,673.6 217.2,670.5 221.0,669.5C224.8,668.5 228.0,667.0 232.4,667.6C236.8,668.2 242.6,671.5 247.7,673.3C252.8,675.0 258.1,678.1 262.9,678.1C267.7,678.1 271.9,675.0 276.3,673.3C280.8,671.5 284.2,668.9 289.6,667.6C295.0,666.3 303.6,665.4 308.7,665.7C313.8,666.0 317.2,667.6 320.1,669.5C323.0,671.4 322.9,675.6 325.8,677.2C328.7,678.8 335.4,678.8 337.3,679.1 M347.2,659.0C346.2,661.1 343.1,667.7 341.1,671.4C339.1,675.1 337.0,676.5 335.4,681.0C333.8,685.5 332.1,692.1 331.5,698.1C330.9,704.1 330.2,710.9 331.5,717.2C332.8,723.6 337.6,730.5 339.2,736.2C340.8,741.9 340.5,747.0 341.1,751.5C341.7,756.0 340.8,757.8 343.0,762.9C345.2,768.0 351.5,776.3 354.4,782.0C357.2,787.7 359.5,791.5 360.1,797.2C360.7,802.9 358.8,810.6 358.2,816.3C357.6,822.0 355.4,826.4 356.3,831.5C357.2,836.6 362.6,844.4 363.9,847.0 M48.5,845.5C46.8,847.6 41.4,853.4 38.1,858.4C34.8,863.4 31.1,870.8 28.5,875.6C25.9,880.4 24.4,884.1 22.8,887.0C21.2,889.9 19.6,891.8 19.0,892.7 M363.6,845.5C364.3,847.6 367.4,854.3 367.8,858.4C368.2,862.5 365.9,865.4 365.9,869.9C365.9,874.4 366.9,880.3 367.8,885.1C368.8,889.9 370.4,894.0 371.6,898.5C372.8,903.0 374.3,909.6 374.8,911.8 M374.8,911.8C375.5,914.3 376.6,920.0 378.8,927.0C381.1,934.0 385.8,944.2 388.3,953.7C390.9,963.2 392.8,975.0 394.1,984.2C395.4,993.4 395.1,1000.4 396.0,1009.0C396.9,1017.6 399.2,1031.2 399.8,1035.7"/>
<path fill="#cf8a50" d="M319.1,500.2h8.6l-4.3,-7.2zM292.6,550.8h8.6l-4.3,-7.2zM307.4,550.8h8.6l-4.3,-7.2zM358.7,551.6h8.6l-4.3,-7.2zM249.5,558.1h8.6l-4.3,-7.2zM240.5,564.9h8.6l-4.3,-7.2zM133.8,560.0h8.6l-4.3,-7.2zM148.7,561.9h8.6l-4.3,-7.2zM118.8,584.0h8.6l-4.3,-7.2zM59.9,587.1h8.6l-4.3,-7.2zM349.7,657.6h8.6l-4.3,-7.2zM448.8,481.7h8.6l-4.3,-7.2zM376.8,529.7h8.6l-4.3,-7.2zM386.7,537.9h8.6l-4.3,-7.2zM388.8,591.8h8.6l-4.3,-7.2zM442.7,621.7h8.6l-4.3,-7.2zM516.9,629.4h8.6l-4.3,-7.2zM550.4,637.9h8.6l-4.3,-7.2zM568.5,629.4h8.6l-4.3,-7.2zM601.7,625.6h8.6l-4.3,-7.2zM558.6,579.8h8.6l-4.3,-7.2zM576.5,557.9h8.6l-4.3,-7.2zM581.7,565.7h8.6l-4.3,-7.2zM599.6,560.4h8.6l-4.3,-7.2zM589.7,514.8h8.6l-4.3,-7.2zM578.6,487.8h8.6l-4.3,-7.2zM610.6,485.7h8.6l-4.3,-7.2zM678.9,506.8h8.6l-4.3,-7.2zM669.5,612.6h8.6l-4.3,-7.2zM703.8,608.4h8.6l-4.3,-7.2zM851.7,497.5h8.6l-4.3,-7.2zM825.6,533.5h8.6l-4.3,-7.2zM790.5,551.6h8.6l-4.3,-7.2zM735.8,574.9h8.6l-4.3,-7.2zM830.6,588.6h8.6l-4.3,-7.2zM781.8,614.5h8.6l-4.3,-7.2zM891.7,577.3h8.6l-4.3,-7.2zM895.6,554.7h8.6l-4.3,-7.2zM922.6,555.4h8.6l-4.3,-7.2zM943.6,552.8h8.6l-4.3,-7.2zM954.6,518.4h8.6l-4.3,-7.2zM976.7,523.6h8.6l-4.3,-7.2zM1018.7,513.5h8.6l-4.3,-7.2zM966.6,568.8h8.6l-4.3,-7.2zM930.6,598.5h8.6l-4.3,-7.2zM999.6,600.8h8.6l-4.3,-7.2zM1001.7,612.6h8.6l-4.3,-7.2zM1073.6,641.6h8.6l-4.3,-7.2zM1077.7,507.4h8.6l-4.3,-7.2zM1081.2,561.5h8.6l-4.3,-7.2zM1040.2,505.5h8.6l-4.3,-7.2zM772.4,661.4h8.6l-4.3,-7.2zM58.7,670.0h8.6l-4.3,-7.2zM76.6,754.6h8.6l-4.3,-7.2zM84.6,812.6h8.6l-4.3,-7.2zM155.7,793.7h8.6l-4.3,-7.2zM179.7,763.6h8.6l-4.3,-7.2zM198.4,769.3h8.6l-4.3,-7.2zM197.7,794.6h8.6l-4.3,-7.2zM218.6,790.4h8.6l-4.3,-7.2zM209.5,750.8h8.6l-4.3,-7.2zM225.7,761.7h8.6l-4.3,-7.2zM208.9,717.8h8.6l-4.3,-7.2zM219.6,682.4h8.6l-4.3,-7.2zM302.5,680.7h8.6l-4.3,-7.2zM313.0,715.7h8.6l-4.3,-7.2zM330.7,709.6h8.6l-4.3,-7.2zM364.8,752.5h8.6l-4.3,-7.2zM307.6,773.7h8.6l-4.3,-7.2zM356.8,779.6h8.6l-4.3,-7.2zM307.6,836.6h8.6l-4.3,-7.2zM168.7,849.7h8.6l-4.3,-7.2zM417.8,667.7h8.6l-4.3,-7.2zM456.7,681.6h8.6l-4.3,-7.2zM417.8,690.8h8.6l-4.3,-7.2zM398.7,698.8h8.6l-4.3,-7.2zM396.6,753.5h8.6l-4.3,-7.2zM412.6,779.6h8.6l-4.3,-7.2zM406.7,797.9h8.6l-4.3,-7.2zM386.7,811.6h8.6l-4.3,-7.2zM496.5,821.7h8.6l-4.3,-7.2zM485.4,843.6h8.6l-4.3,-7.2zM585.7,829.7h8.6l-4.3,-7.2zM615.8,774.4h8.6l-4.3,-7.2zM636.7,737.7h8.6l-4.3,-7.2zM661.5,761.7h8.6l-4.3,-7.2zM647.6,807.6h8.6l-4.3,-7.2zM691.8,684.3h8.6l-4.3,-7.2zM711.6,716.7h8.6l-4.3,-7.2zM712.8,725.8h8.6l-4.3,-7.2zM772.4,663.9h8.6l-4.3,-7.2zM764.6,728.7h8.6l-4.3,-7.2zM817.6,721.5h8.6l-4.3,-7.2zM841.6,699.5h8.6l-4.3,-7.2zM895.6,690.6h8.6l-4.3,-7.2zM967.6,701.8h8.6l-4.3,-7.2zM1063.6,686.8h8.6l-4.3,-7.2zM1073.6,716.5h8.6l-4.3,-7.2zM1052.6,735.6h8.6l-4.3,-7.2zM965.5,735.7h8.6l-4.3,-7.2zM960.5,778.8h8.6l-4.3,-7.2zM923.6,785.5h8.6l-4.3,-7.2zM1013.3,797.5h8.6l-4.3,-7.2zM1071.3,821.7h8.6l-4.3,-7.2zM782.3,768.5h8.6l-4.3,-7.2zM800.6,795.4h8.6l-4.3,-7.2zM853.6,824.6h8.6l-4.3,-7.2zM891.7,826.7h8.6l-4.3,-7.2zM168.7,850.9h8.6l-4.3,-7.2zM111.7,896.1h8.6l-4.3,-7.2zM87.3,918.6h8.6l-4.3,-7.2zM159.5,911.7h8.6l-4.3,-7.2zM208.5,904.6h8.6l-4.3,-7.2zM270.5,858.9h8.6l-4.3,-7.2zM272.4,893.6h8.6l-4.3,-7.2zM308.8,907.7h8.6l-4.3,-7.2zM293.5,935.5h8.6l-4.3,-7.2zM285.3,946.6h8.6l-4.3,-7.2zM257.3,952.7h8.6l-4.3,-7.2zM228.5,968.9h8.6l-4.3,-7.2zM220.3,975.7h8.6l-4.3,-7.2zM271.4,986.8h8.6l-4.3,-7.2zM321.3,981.6h8.6l-4.3,-7.2zM352.4,967.5h8.6l-4.3,-7.2zM351.6,989.6h8.6l-4.3,-7.2zM318.5,1012.9h8.6l-4.3,-7.2zM94.6,960.7h8.6l-4.3,-7.2zM59.5,983.4h8.6l-4.3,-7.2zM74.5,999.6h8.6l-4.3,-7.2zM80.6,1024.5h8.6l-4.3,-7.2zM124.5,1017.7h8.6l-4.3,-7.2zM311.0,1039.6h8.6l-4.3,-7.2zM466.8,876.6h8.6l-4.3,-7.2zM448.5,927.7h8.6l-4.3,-7.2zM433.8,946.8h8.6l-4.3,-7.2zM415.9,953.8h8.6l-4.3,-7.2zM425.6,974.8h8.6l-4.3,-7.2zM440.5,999.6h8.6l-4.3,-7.2zM414.7,1011.6h8.6l-4.3,-7.2zM408.6,1020.5h8.6l-4.3,-7.2zM550.4,947.7h8.6l-4.3,-7.2zM527.5,1005.6h8.6l-4.3,-7.2zM641.5,878.9h8.6l-4.3,-7.2zM712.8,1024.7h8.6l-4.3,-7.2zM782.7,863.9h8.6l-4.3,-7.2zM765.6,898.4h8.6l-4.3,-7.2zM729.9,906.0h8.6l-4.3,-7.2zM740.6,914.4h8.6l-4.3,-7.2zM842.4,912.5h8.6l-4.3,-7.2zM893.5,900.6h8.6l-4.3,-7.2zM944.5,871.5h8.6l-4.3,-7.2zM969.5,853.8h8.6l-4.3,-7.2zM803.7,945.2h8.6l-4.3,-7.2zM776.6,984.3h8.6l-4.3,-7.2zM1048.6,921.6h8.6l-4.3,-7.2zM1054.5,975.7h8.6l-4.3,-7.2zM973.5,1016.3h8.6l-4.3,-7.2zM951.6,1020.5h8.6l-4.3,-7.2zM1047.8,1000.5h8.6l-4.3,-7.2z"/>
<rect x="662" y="957.5" width="32.5" height="16.5" rx="2.5" fill="#f8e6d2" stroke="#e2c199" stroke-width="1"/>
<text x="678.2" y="969.7" text-anchor="middle" font-family="DejaVu Sans, Liberation Sans, sans-serif" font-size="9.5" fill="#5a3a1c" textLength="22" lengthAdjust="spacingAndGlyphs">EN 2</text>
<g font-family="DejaVu Sans, Liberation Sans, sans-serif" fill="#333" stroke="#fff" stroke-opacity=".85" stroke-width="2.2" stroke-linejoin="round" paint-order="stroke" text-anchor="middle">
<text x="52.5" y="484.6" font-size="11" textLength="43.8" lengthAdjust="spacingAndGlyphs">Tentúgal</text>
<text x="276.7" y="507.4" font-size="13.5" textLength="54.3" lengthAdjust="spacingAndGlyphs">Coimbra</text>
<text x="169.9" y="521.5" font-size="11" textLength="35.3" lengthAdjust="spacingAndGlyphs">Taveiro</text>
<text x="331.9" y="581.0" font-size="11" textLength="25.7" lengthAdjust="spacingAndGlyphs">Ceira</text>
<text x="524.8" y="500.6" font-size="11" textLength="62.9" lengthAdjust="spacingAndGlyphs">Vila Nova de</text>
<text x="525.2" y="513.9" font-size="11" textLength="37.2" lengthAdjust="spacingAndGlyphs">Poiares</text>
<text x="703.2" y="485.3" font-size="11" textLength="25.7" lengthAdjust="spacingAndGlyphs">Beira</text>
<text x="822.9" y="493.9" font-size="11" textLength="35.8" lengthAdjust="spacingAndGlyphs">Arganil</text>
<text x="742.1" y="613.4" font-size="11" textLength="21.9" lengthAdjust="spacingAndGlyphs">Góis</text>
<text x="176.2" y="684.7" font-size="11" textLength="61" lengthAdjust="spacingAndGlyphs">Condeixa-a-</text>
<text x="176.0" y="698.6" font-size="11" textLength="25.3" lengthAdjust="spacingAndGlyphs">Nova</text>
<text x="543.9" y="697.1" font-size="11" textLength="29.9" lengthAdjust="spacingAndGlyphs">Lousã</text>
<text x="416.4" y="721.9" font-size="11" textLength="58.1" lengthAdjust="spacingAndGlyphs">Miranda do</text>
<text x="416.2" y="736.2" font-size="11" textLength="29.9" lengthAdjust="spacingAndGlyphs">Corvo</text>
<text x="974.0" y="812.8" font-size="11" textLength="59.1" lengthAdjust="spacingAndGlyphs">Pampilhosa</text>
<text x="974.0" y="826.7" font-size="11" textLength="41.9" lengthAdjust="spacingAndGlyphs">da Serra</text>
<text x="333.8" y="852.7" font-size="11" textLength="33.4" lengthAdjust="spacingAndGlyphs">Penela</text>
<text x="391.5" y="882.1" font-size="11" textLength="43.5" lengthAdjust="spacingAndGlyphs">Espinhal</text>
<text x="597.6" y="892.1" font-size="11" textLength="60.6" lengthAdjust="spacingAndGlyphs">Castanheira</text>
<text x="597.6" y="906.0" font-size="11" textLength="38.1" lengthAdjust="spacingAndGlyphs">de Pera</text>
<text x="757.3" y="874.2" font-size="11" textLength="37.2" lengthAdjust="spacingAndGlyphs">Alvares</text>
</g>
<g font-family="DejaVu Sans, Liberation Sans, sans-serif" font-style="italic" font-size="10" fill="#5b8ec6" stroke="#fff" stroke-opacity=".7" stroke-width="1.5" paint-order="stroke" text-anchor="middle">
<text x="891.7" y="955.3" textLength="39" lengthAdjust="spacingAndGlyphs">Albufeira</text>
<text x="891.7" y="966.8" textLength="39" lengthAdjust="spacingAndGlyphs">de Cabril</text>
</g>
<g font-family="DejaVu Sans, Liberation Sans, sans-serif" font-style="italic" font-size="9.5" fill="#8c1c12" stroke="#f2efe9" stroke-opacity=".8" stroke-width="1.6" paint-order="stroke" text-anchor="middle">
<text x="178.7" y="659.4">11</text>
<text x="199.7" y="667.6">1</text>
<text x="311.0" y="669.1">2</text>
<text x="320.5" y="673.3">2</text>
<text x="338.8" y="682.8">27</text>
<text x="342.2" y="762.9">26</text>
<text x="60.9" y="832.3">10A</text>
<text x="350.0" y="565.2">28</text>
<text x="363.9" y="869.1">25</text>
<text x="485.0" y="1036.8">20</text>
<text x="531.7" y="1035.3">21</text>
</g>
<path d="M620.8,685.7L679.9,750.5L627.5,822.0L526.5,769.6L529.0,725.7Z" fill="#ff9540" fill-opacity=".2" stroke="#ff9541" stroke-opacity=".52" stroke-width="4" stroke-linejoin="round"/>
</svg>
</div>
<!-- leaflet controls -->
<div class="a lb" style="left:29px;top:493px;width:34px;height:184px"></div>
<div class="a" style="left:31px;top:524px;width:30px;height:1px;background:#ccc"></div>
<div class="a" style="left:31px;top:554px;width:30px;height:1px;background:#ccc"></div>
<div class="a" style="left:31px;top:584px;width:30px;height:1px;background:#ccc"></div>
<div class="a" style="left:31px;top:614px;width:30px;height:1px;background:#ccc"></div>
<div class="a" style="left:31px;top:644px;width:30px;height:1px;background:#ccc"></div>
<div class="a lb" style="left:29px;top:689px;width:34px;height:64px"></div>
<div class="a" style="left:31px;top:720px;width:30px;height:1px;background:#ccc"></div>
<svg style="left:31px;top:495px" width="30" height="258" viewBox="31 495 30 258">
<g fill="#444" stroke="none">
<path d="M41.5,513.5L50.6,504.4" stroke="#3c3c3c" stroke-width="1.5" fill="none"/>
<rect x="40.1" y="512.1" width="2.9" height="2.9" fill="#fff" stroke="#3c3c3c" stroke-width="1.1"/>
<rect x="49.2" y="502.9" width="2.9" height="2.9" fill="#fff" stroke="#3c3c3c" stroke-width="1.1"/>
<path d="M45.4,533.1L52,536.4L50.8,543.9L43.2,544.7L40.2,538.4Z"/>
<rect x="41.1" y="564.1" width="9.8" height="9.8"/>
<circle cx="46.1" cy="599.3" r="5.8"/>
<path d="M46.2,624a4.5,4.5 0 0 1 4.5,4.5c0,3 -3.4,5.6 -4.5,7.2c-1.1,-1.6 -4.5,-4.2 -4.5,-7.2a4.5,4.5 0 0 1 4.5,-4.5zm0,2.9a1.6,1.6 0 1 0 0.001,0z" fill-rule="evenodd"/>
<circle cx="45.6" cy="659.2" r="5.6" fill="#fff" stroke="#444" stroke-width="1.1"/>
<path d="M46.5,700.6h-4.6a1.6,1.6 0 0 0 -1.6,1.6v6.6a1.6,1.6 0 0 0 1.6,1.6h6.8a1.6,1.6 0 0 0 1.6,-1.6v-4.6" fill="none" stroke="#3c3c3c" stroke-width="1.5"/>
<path d="M44.2,706.9l5.9,-6" fill="none" stroke="#3c3c3c" stroke-width="1.6"/>
<circle cx="51.9" cy="699.3" r=".9" fill="#3c3c3c"/>
<rect x="41.6" y="731.8" width="9.6" height="9" rx=".8" fill="#9a9a9a"/>
<path d="M41.6,733.5h9.6" stroke="#777" stroke-width=".6"/>
<rect x="41" y="729.3" width="10.8" height="1.6" fill="#3c3c3c"/>
<path d="M44.3,729.3v-1.3h4.2v1.3" fill="none" stroke="#3c3c3c" stroke-width="1.1"/>
</g></svg>
<div class="a lb" style="left:1043px;top:483px;width:34px;height:64px"></div>
<div class="a" style="left:1045px;top:514px;width:30px;height:1px;background:#ccc"></div>
<span class="a" style="left:1045px;top:485px;width:30px;height:30px;line-height:30px;text-align:center;font-size:24px;font-weight:700;color:#333">+</span>
<span class="a" style="left:1045px;top:515px;width:30px;height:30px;line-height:30.5px;text-align:center;font-size:23px;font-weight:700;color:#333">&#8722;</span>
<div class="a lb" style="left:1043px;top:557px;width:34px;height:34px"></div>
<svg style="left:1048.8px;top:562.7px" width="22.5" height="22.5" viewBox="0 0 24 24"><path fill="#333" d="M12,18.54L19.37,12.8L21,14.07L12,21.07L3,14.07L4.62,12.81L12,18.54M12,16L3,9L12,2L21,9L12,16M12,4.53L6.26,9L12,13.47L17.74,9L12,4.53Z"/></svg>
<div class="a" style="left:991px;top:995px;width:86px;height:18px;border:2px solid #777;border-top:none;background:rgba(255,255,255,.8);font-size:12px;line-height:13.2px;padding:3px 5px 0;color:#333;text-shadow:1px 1px #fff;white-space:nowrap">5 km</div>
<div class="a" style="right:781px;top:1018px;height:17px;background:rgba(255,255,255,.8);font-size:12px;line-height:18.6px;padding:0 5px;color:#333;white-space:nowrap"><svg style="position:relative;display:inline-block;vertical-align:baseline;margin-right:3px" width="12" height="8" viewBox="0 0 12 8"><path fill="#4C7BE1" d="M0 0h12v4H0z"/><path fill="#FFD500" d="M0 4h12v3H0z"/><path fill="#E0BC00" d="M0 7h12v1H0z"/></svg><span style="color:#0078a8">Leaflet</span> <span>|</span> &copy; <span style="color:#0078a8">OpenStreetMap</span> contributors</div>
<div class="a bar"></div>
<svg style="left:18px;top:8px" width="32" height="32" viewBox="0 0 24 24"><path fill="#fff" d="M3,6H21V8H3V6M3,11H21V13H3V11M3,16H21V18H3V16Z"/></svg>
<!-- logo -->
<svg style="left:74px;top:11px" width="35" height="27" viewBox="74 11 35 27"><g fill="#fff"><path d="M81.86,13L86.2,13L91.38,18L96.39,13L101.07,13L91.38,23Z"/><path d="M75.85,26.37L82.36,23.87L88.04,26.2L80.86,29.2Z"/><path d="M94.89,26.2L100.06,23.87L106.9,26.37L101.7,29.2Z"/><path d="M83.53,30.88L91.38,27.38L99.23,30.88L91.38,35.73Z"/></g></svg>
<svg style="left:1713px;top:12px" width="24" height="24" viewBox="0 0 24 24"><path fill="#fff" d="M21,19V20H3V19L5,17V11C5,7.9 7.03,5.17 10,4.29C10,4.19 10,4.1 10,4A2,2 0 0,1 12,2A2,2 0 0,1 14,4C14,4.1 14,4.19 14,4.29C16.97,5.17 19,7.9 19,11V17L21,19M14,21A2,2 0 0,1 12,23A2,2 0 0,1 10,21"/></svg>
<svg style="left:1829px;top:15px" width="18" height="18" viewBox="0 0 24 24"><path fill="#fff" d="M14.08,15.59L16.67,13H7V11H16.67L14.08,8.41L15.5,7L20.5,12L15.5,17L14.08,15.59M19,3A2,2 0 0,1 21,5V9.67L19,7.67V5H5V19H19V16.33L21,14.33V19A2,2 0 0,1 19,21H5C3.89,21 3,20.1 3,19V5C3,3.89 3.89,3 5,3H19Z"/></svg>
<!-- breadcrumb chevron -->
<svg style="left:109px;top:56px" width="22" height="22" viewBox="0 0 24 24"><path fill="rgba(0,0,0,.6)" d="M8.59,16.58L13.17,12L8.59,7.41L10,6L16,12L10,18L8.59,16.58Z"/></svg>
<!-- buttons card 1 -->
<div class="a btn" style="left:47px;top:405px;width:64px"></div>
<div class="a btn" style="left:119px;top:405px;width:183px"></div>
<div class="a btn" style="left:310px;top:405px;width:134px"></div>
<svg style="left:70px;top:414px" width="18" height="18" viewBox="0 0 24 24"><path fill="#fff" d="M20.71,7.04C21.1,6.65 21.1,6 20.71,5.63L18.37,3.29C18,2.9 17.35,2.9 16.96,3.29L15.12,5.12L18.87,8.87M3,17.25V21H6.75L17.81,9.93L14.06,6.18L3,17.25Z"/></svg>
<svg style="left:135px;top:414px" width="18" height="18" viewBox="0 0 24 24"><path fill="#fff" d="M17,13H13V17H11V13H7V11H11V7H13V11H17M12,2A10,10 0 0,0 2,12A10,10 0 0,0 12,22A10,10 0 0,0 22,12A10,10 0 0,0 12,2Z"/></svg>
<!-- card 2 -->
<div class="a btn" style="left:1109px;top:175px;width:134px;box-shadow:none"></div>
<svg style="left:1125px;top:184px" width="18" height="18" viewBox="0 0 24 24"><path fill="#fff" d="M17,13H13V17H11V13H7V11H11V7H13V11H17M12,2A10,10 0 0,0 2,12A10,10 0 0,0 12,22A10,10 0 0,0 22,12A10,10 0 0,0 12,2Z"/></svg>
<div class="a" style="left:1540px;top:171px;width:300px;height:44px;border:1px solid rgba(0,0,0,.48);border-radius:4px"></div>
<svg style="left:1804px;top:181px" width="24" height="24" viewBox="0 0 24 24"><path fill="rgba(0,0,0,.68)" d="M9.5,3A6.5,6.5 0 0,1 16,9.5C16,11.11 15.41,12.59 14.44,13.73L14.71,14H15.5L20.5,19L19,20.5L14,15.5V14.71L13.73,14.44C12.59,15.41 11.11,16 9.5,16A6.5,6.5 0 0,1 3,9.5A6.5,6.5 0 0,1 9.5,3M9.5,5C7,5 5,7 5,9.5C5,12 7,14 9.5,14C12,14 14,12 14,9.5C14,7 12,5 9.5,5Z"/></svg>
<div class="a hr" style="top:262px"></div>
<div class="a hr" style="top:306px"></div>
<div class="a hr" style="top:350px"></div>
<div class="a hr" style="top:394px"></div>
<svg style="left:1759px;top:276px" width="18" height="18" viewBox="0 0 24 24"><path fill="#f44336" d="M19,4H15.5L14.5,3H9.5L8.5,4H5V6H19M6,19A2,2 0 0,0 8,21H16A2,2 0 0,0 18,19V7H6V19Z"/></svg>
<svg style="left:1759px;top:320px" width="18" height="18" viewBox="0 0 24 24"><path fill="#f44336" d="M19,4H15.5L14.5,3H9.5L8.5,4H5V6H19M6,19A2,2 0 0,0 8,21H16A2,2 0 0,0 18,19V7H6V19Z"/></svg>
<svg style="left:1759px;top:364px" width="18" height="18" viewBox="0 0 24 24"><path fill="#f44336" d="M19,4H15.5L14.5,3H9.5L8.5,4H5V6H19M6,19A2,2 0 0,0 8,21H16A2,2 0 0,0 18,19V7H6V19Z"/></svg>
<svg style="left:1759px;top:408px" width="18" height="18" viewBox="0 0 24 24"><path fill="#f44336" d="M19,4H15.5L14.5,3H9.5L8.5,4H5V6H19M6,19A2,2 0 0,0 8,21H16A2,2 0 0,0 18,19V7H6V19Z"/></svg>
<svg style="left:1816px;top:469px" width="24" height="24" viewBox="0 0 24 24"><path fill="rgba(0,0,0,.6)" d="M7,10L12,15L17,10H7Z"/></svg>
<div class="a" style="left:1694px;top:497px;width:146px;height:1px;background:rgba(0,0,0,.45)"></div>
<!-- footer -->
<div class="a foot"></div>
<svg style="left:1822.5px;top:1051.3px" width="24" height="24" viewBox="0 0 24 24"><path fill="#fff" d="M22,12A10,10 0 0,1 12,22A10,10 0 0,1 2,12A10,10 0 0,1 12,2A10,10 0 0,1 22,12M7.4,15.4L12,10.8L16.6,15.4L18,14L12,8L6,14L7.4,15.4Z"/></svg>
<span class="t" style="left:112.87px;top:7px;font-size:24px;line-height:36px;font-weight:400;color:#fff;letter-spacing:0px;transform:scaleX(0.9256)">MOBITRUST</span>
<span class="t" style="left:1513.80px;top:9px;font-size:20px;line-height:30px;font-weight:400;color:#fff;letter-spacing:0px;transform:scaleX(0.9327)">ADMIN ONESOURCE</span>
<span class="t" style="left:1748.60px;top:14px;font-size:14px;line-height:21px;font-weight:700;color:#fff;letter-spacing:1.25px;transform:scaleX(0.9224)">SIGN OUT</span>
<span class="t" style="left:23.00px;top:56px;font-size:16px;line-height:24px;font-weight:400;color:rgba(0,0,0,.87);letter-spacing:0px;transform:scaleX(0.9990)">Dashboard</span>
<span class="t" style="left:148.90px;top:56px;font-size:16px;line-height:24px;font-weight:400;color:#3b6cbb;letter-spacing:0px;transform:scaleX(1.0155)">View Mission</span>
<span class="t" style="left:19.50px;top:89px;font-size:32px;line-height:48px;font-weight:700;color:#3b6cbb;letter-spacing:0px;transform:scaleX(0.9577)">View Mission</span>
<span class="t" style="left:46.71px;top:154px;font-size:16px;line-height:24px;font-weight:400;color:#3b6cbb;letter-spacing:0px;transform:scaleX(0.9933)">Name</span>
<span class="t" style="left:47.40px;top:178px;font-size:16px;line-height:24px;font-weight:400;color:#000;letter-spacing:0px;transform:scaleX(0.9929)">Wildfire Containment</span>
<span class="t" style="left:46.98px;top:234px;font-size:16px;line-height:24px;font-weight:400;color:#3b6cbb;letter-spacing:0px;transform:scaleX(1.0188)">Description</span>
<span class="t" style="left:47.00px;top:258px;font-size:16px;line-height:24px;font-weight:400;color:#000;letter-spacing:0px;transform:scaleX(0.9978)">Deployment of aerial drones, thermal sensors, and firefighter GPS trackers to monitor and contain a large-scale wildfire threatening residential</span>
<span class="t" style="left:47.20px;top:282px;font-size:16px;line-height:24px;font-weight:400;color:#000;letter-spacing:0px;transform:scaleX(0.9848)">zones.</span>
<span class="t" style="left:47.20px;top:338px;font-size:16px;line-height:24px;font-weight:400;color:#3b6cbb;letter-spacing:0px;transform:scaleX(0.9987)">Status</span>
<span class="t" style="left:47.20px;top:362px;font-size:16px;line-height:24px;font-weight:400;color:#000;letter-spacing:0px;transform:scaleX(0.9970)">Finished</span>
<span class="t" style="left:399.80px;top:338px;font-size:16px;line-height:24px;font-weight:400;color:#3b6cbb;letter-spacing:0px;transform:scaleX(0.9898)">Start Date</span>
<span class="t" style="left:400.20px;top:362px;font-size:16px;line-height:24px;font-weight:400;color:#000;letter-spacing:0px;transform:scaleX(0.9949)">2025-06-06 11:24</span>
<span class="t" style="left:753.23px;top:338px;font-size:16px;line-height:24px;font-weight:400;color:#3b6cbb;letter-spacing:0px;transform:scaleX(0.9694)">End Date</span>
<span class="t" style="left:754.20px;top:362px;font-size:16px;line-height:24px;font-weight:400;color:#000;letter-spacing:0px;transform:scaleX(0.9792)">2025-06-15 17:18</span>
<span class="t" style="left:158.50px;top:413px;font-size:14px;line-height:21px;font-weight:700;color:#fff;letter-spacing:1.25px;transform:scaleX(0.9324)">CREATE MISSION</span>
<span class="t" style="left:327.50px;top:413px;font-size:14px;line-height:21px;font-weight:700;color:#fff;letter-spacing:1.25px;transform:scaleX(0.9473)">FLIGHT PLAN</span>
<span class="t" style="left:1109.70px;top:148px;font-size:18.72px;line-height:28px;font-weight:700;color:#3b6cbb;letter-spacing:0px;transform:scaleX(0.9503)">Add Teams</span>
<span class="t" style="left:1148.80px;top:183px;font-size:14px;line-height:21px;font-weight:700;color:#fff;letter-spacing:1.25px;transform:scaleX(0.9467)">ADD TEAM</span>
<span class="t" style="left:1556.20px;top:182px;font-size:16px;line-height:24px;font-weight:400;color:rgba(0,0,0,.6);letter-spacing:0px;transform:scaleX(0.9820)">Search</span>
<span class="t" style="left:1126.00px;top:225px;font-size:19.2px;line-height:29px;font-weight:700;color:#3b6cbb;letter-spacing:0px;transform:scaleX(1.0412)">Team</span>
<span class="t" style="left:1754.90px;top:225px;font-size:19.2px;line-height:29px;font-weight:700;color:#3b6cbb;letter-spacing:0px;transform:scaleX(0.9915)">Actions</span>
<span class="t" style="left:1125.90px;top:274px;font-size:14px;line-height:21px;font-weight:400;color:#3b6cbb;letter-spacing:0px;transform:scaleX(1.0213)">Comms &amp; Tech Support</span>
<span class="t" style="left:1124.86px;top:318px;font-size:14px;line-height:21px;font-weight:400;color:#3b6cbb;letter-spacing:0px;transform:scaleX(1.0403)">Medical Standby Team</span>
<span class="t" style="left:1124.88px;top:362px;font-size:14px;line-height:21px;font-weight:400;color:#3b6cbb;letter-spacing:0px;transform:scaleX(1.0175)">Frontline Wildland Crew</span>
<span class="t" style="left:1125.90px;top:407px;font-size:14px;line-height:21px;font-weight:400;color:#3b6cbb;letter-spacing:0px;transform:scaleX(1.0219)">Air Support Unit</span>
<span class="t" style="left:1693.99px;top:447px;font-size:12px;line-height:18px;font-weight:400;color:rgba(0,0,0,.6);letter-spacing:0px;transform:scaleX(1.0067)">Item per Page</span>
<span class="t" style="left:1694.70px;top:472px;font-size:16px;line-height:24px;font-weight:400;color:#000;letter-spacing:0px;transform:scaleX(0.8778)">5</span>
<span class="t" style="left:24.60px;top:1048px;font-size:20px;line-height:30px;font-weight:700;color:#fff;letter-spacing:0px;transform:scaleX(0.9517)">Cameras</span>

</body></html>
